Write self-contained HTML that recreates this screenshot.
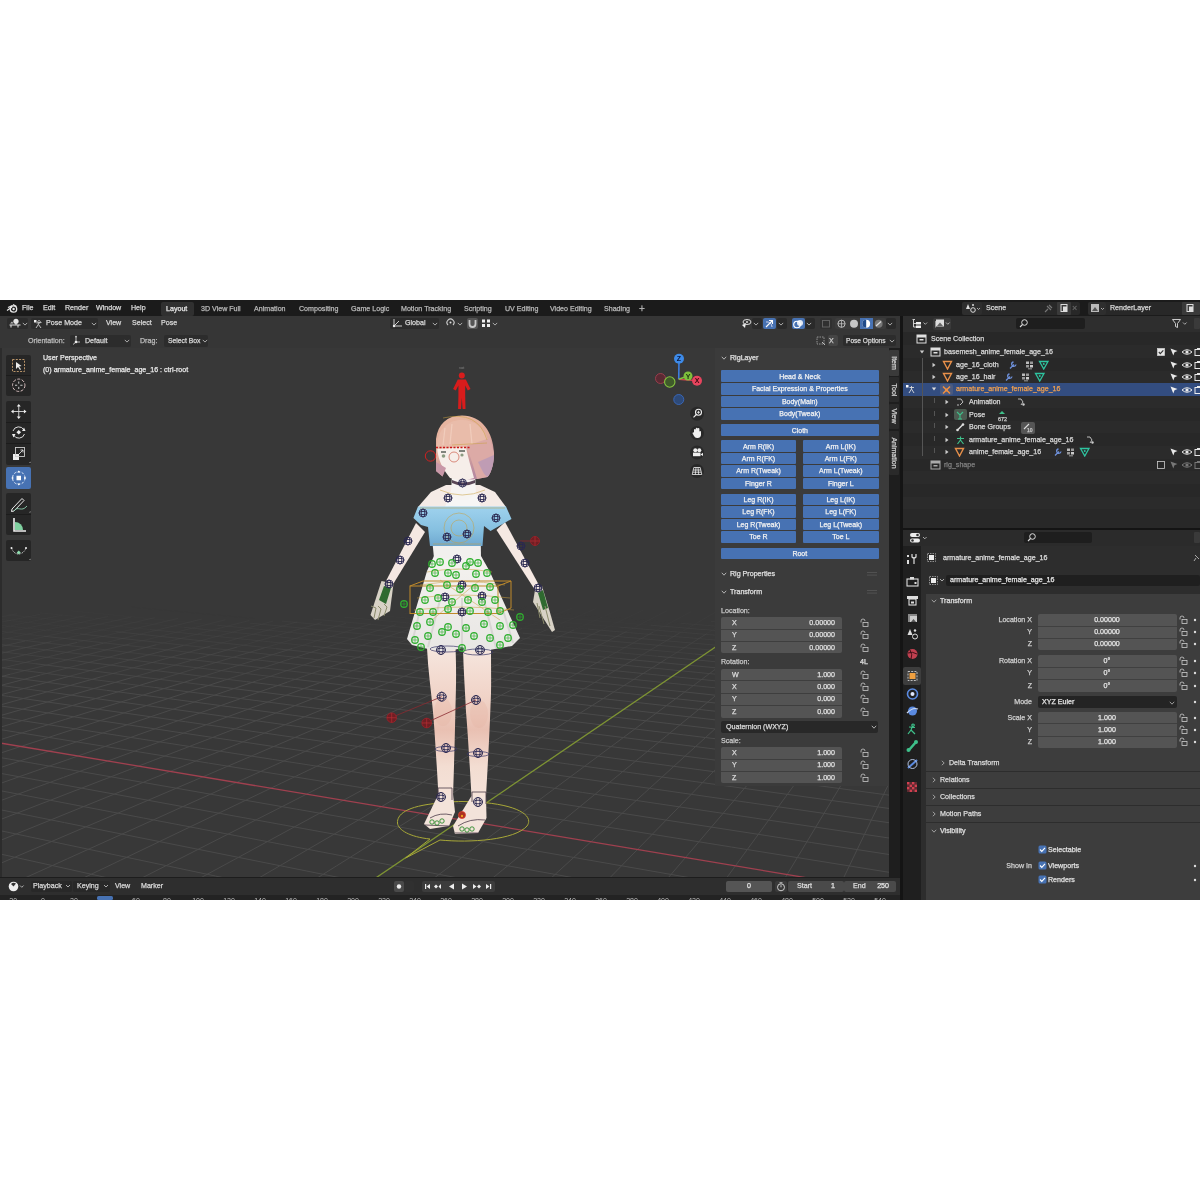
<!DOCTYPE html>
<html><head><meta charset="utf-8">
<style>
html,body{margin:0;padding:0;background:#fff;}
body{width:1200px;height:1200px;position:relative;overflow:hidden;font-family:"Liberation Sans",sans-serif;font-size:7.5px;color:#d8d8d8;}
.a{position:absolute;}
.t{position:absolute;white-space:nowrap;line-height:10px;height:10px;-webkit-text-stroke:0.25px currentColor;will-change:transform;}
</style></head><body>
<div class="a" style="left:0px;top:300px;width:1200px;height:600px;background:#161616;"></div>
<div class="a" style="left:0px;top:300px;width:1200px;height:16px;background:#1b1b1b;"></div>
<div class="a" style="left:0px;top:316px;width:900px;height:561px;background:#383838;"></div>
<div class="a" style="left:0px;top:316px;width:900px;height:32px;background:#363636;"></div>
<svg class="a" style="left:0;top:0" width="900" height="877" viewBox="0 0 900 877">
<defs><clipPath id="vc"><rect x="0" y="316" width="900" height="561"/></clipPath></defs>
<g clip-path="url(#vc)">
<g stroke="#4a4a4a" stroke-width="1" fill="none">
<line x1="-127.0" y1="636.6" x2="-5.1" y2="613.1" stroke-opacity="0.19"/>
<line x1="-102.0" y1="637.3" x2="17.3" y2="613.7" stroke-opacity="0.20"/>
<line x1="-76.9" y1="638.0" x2="39.8" y2="614.4" stroke-opacity="0.21"/>
<line x1="-51.6" y1="638.8" x2="62.5" y2="615.0" stroke-opacity="0.22"/>
<line x1="-26.2" y1="639.5" x2="85.3" y2="615.7" stroke-opacity="0.23"/>
<line x1="-137.2" y1="670.1" x2="-0.6" y2="640.2" stroke-opacity="0.57"/>
<line x1="-0.6" y1="640.2" x2="108.3" y2="616.4" stroke-opacity="0.24"/>
<line x1="-108.1" y1="671.0" x2="25.2" y2="641.0" stroke-opacity="0.58"/>
<line x1="25.2" y1="641.0" x2="131.4" y2="617.0" stroke-opacity="0.25"/>
<line x1="-78.8" y1="671.8" x2="51.1" y2="641.7" stroke-opacity="0.59"/>
<line x1="51.1" y1="641.7" x2="154.7" y2="617.7" stroke-opacity="0.26"/>
<line x1="-49.3" y1="672.6" x2="77.2" y2="642.4" stroke-opacity="0.59"/>
<line x1="77.2" y1="642.4" x2="178.1" y2="618.4" stroke-opacity="0.27"/>
<line x1="-178.8" y1="712.6" x2="-19.7" y2="673.5" stroke-opacity="0.93"/>
<line x1="-19.7" y1="673.5" x2="103.5" y2="643.2" stroke-opacity="0.60"/>
<line x1="103.5" y1="643.2" x2="201.6" y2="619.1" stroke-opacity="0.28"/>
<line x1="-144.6" y1="713.5" x2="10.1" y2="674.3" stroke-opacity="0.94"/>
<line x1="10.1" y1="674.3" x2="129.9" y2="643.9" stroke-opacity="0.61"/>
<line x1="129.9" y1="643.9" x2="225.3" y2="619.8" stroke-opacity="0.29"/>
<line x1="-110.1" y1="714.5" x2="40.2" y2="675.1" stroke-opacity="0.94"/>
<line x1="40.2" y1="675.1" x2="156.5" y2="644.7" stroke-opacity="0.62"/>
<line x1="156.5" y1="644.7" x2="249.2" y2="620.5" stroke-opacity="0.30"/>
<line x1="-75.4" y1="715.4" x2="70.4" y2="676.0" stroke-opacity="0.95"/>
<line x1="70.4" y1="676.0" x2="183.2" y2="645.5" stroke-opacity="0.63"/>
<line x1="183.2" y1="645.5" x2="273.2" y2="621.1" stroke-opacity="0.31"/>
<line x1="-40.5" y1="716.4" x2="100.8" y2="676.9" stroke-opacity="0.96"/>
<line x1="100.8" y1="676.9" x2="210.2" y2="646.2" stroke-opacity="0.64"/>
<line x1="210.2" y1="646.2" x2="297.4" y2="621.8" stroke-opacity="0.31"/>
<line x1="-188.8" y1="770.5" x2="-5.4" y2="717.3" stroke-opacity="1.00"/>
<line x1="-5.4" y1="717.3" x2="131.4" y2="677.7" stroke-opacity="0.97"/>
<line x1="131.4" y1="677.7" x2="237.3" y2="647.0" stroke-opacity="0.65"/>
<line x1="237.3" y1="647.0" x2="321.7" y2="622.6" stroke-opacity="0.32"/>
<line x1="-147.4" y1="771.6" x2="29.9" y2="718.3" stroke-opacity="1.00"/>
<line x1="29.9" y1="718.3" x2="162.2" y2="678.6" stroke-opacity="0.97"/>
<line x1="162.2" y1="678.6" x2="264.6" y2="647.8" stroke-opacity="0.65"/>
<line x1="264.6" y1="647.8" x2="346.2" y2="623.3" stroke-opacity="0.33"/>
<line x1="-105.7" y1="772.7" x2="65.5" y2="719.3" stroke-opacity="1.00"/>
<line x1="65.5" y1="719.3" x2="193.1" y2="679.5" stroke-opacity="0.98"/>
<line x1="193.1" y1="679.5" x2="292.0" y2="648.6" stroke-opacity="0.66"/>
<line x1="292.0" y1="648.6" x2="370.9" y2="624.0" stroke-opacity="0.34"/>
<line x1="-63.7" y1="773.9" x2="101.3" y2="720.3" stroke-opacity="1.00"/>
<line x1="101.3" y1="720.3" x2="224.3" y2="680.3" stroke-opacity="0.99"/>
<line x1="224.3" y1="680.3" x2="319.7" y2="649.4" stroke-opacity="0.67"/>
<line x1="319.7" y1="649.4" x2="395.7" y2="624.7" stroke-opacity="0.35"/>
<line x1="395.7" y1="624.7" x2="457.7" y2="604.5" stroke-opacity="0.04"/>
<line x1="-21.5" y1="775.0" x2="137.3" y2="721.3" stroke-opacity="1.00"/>
<line x1="137.3" y1="721.3" x2="255.7" y2="681.2" stroke-opacity="1.00"/>
<line x1="255.7" y1="681.2" x2="347.5" y2="650.2" stroke-opacity="0.68"/>
<line x1="347.5" y1="650.2" x2="420.7" y2="625.4" stroke-opacity="0.36"/>
<line x1="420.7" y1="625.4" x2="480.4" y2="605.2" stroke-opacity="0.05"/>
<line x1="-194.0" y1="852.1" x2="21.0" y2="776.1" stroke-opacity="1.00"/>
<line x1="21.0" y1="776.1" x2="173.5" y2="722.3" stroke-opacity="1.00"/>
<line x1="173.5" y1="722.3" x2="287.3" y2="682.1" stroke-opacity="1.00"/>
<line x1="287.3" y1="682.1" x2="375.5" y2="651.0" stroke-opacity="0.69"/>
<line x1="375.5" y1="651.0" x2="445.8" y2="626.1" stroke-opacity="0.37"/>
<line x1="445.8" y1="626.1" x2="503.2" y2="605.9" stroke-opacity="0.06"/>
<line x1="-142.4" y1="853.4" x2="63.7" y2="777.3" stroke-opacity="1.00"/>
<line x1="63.7" y1="777.3" x2="210.0" y2="723.3" stroke-opacity="1.00"/>
<line x1="210.0" y1="723.3" x2="319.1" y2="683.0" stroke-opacity="1.00"/>
<line x1="319.1" y1="683.0" x2="403.7" y2="651.8" stroke-opacity="0.70"/>
<line x1="403.7" y1="651.8" x2="471.1" y2="626.9" stroke-opacity="0.38"/>
<line x1="471.1" y1="626.9" x2="526.2" y2="606.6" stroke-opacity="0.07"/>
<line x1="-90.4" y1="854.7" x2="106.8" y2="778.4" stroke-opacity="1.00"/>
<line x1="106.8" y1="778.4" x2="246.7" y2="724.3" stroke-opacity="1.00"/>
<line x1="246.7" y1="724.3" x2="351.1" y2="683.9" stroke-opacity="1.00"/>
<line x1="351.1" y1="683.9" x2="432.0" y2="652.6" stroke-opacity="0.71"/>
<line x1="432.0" y1="652.6" x2="496.6" y2="627.6" stroke-opacity="0.39"/>
<line x1="496.6" y1="627.6" x2="549.3" y2="607.2" stroke-opacity="0.08"/>
<line x1="-38.2" y1="856.1" x2="150.0" y2="779.6" stroke-opacity="1.00"/>
<line x1="150.0" y1="779.6" x2="283.6" y2="725.3" stroke-opacity="1.00"/>
<line x1="283.6" y1="725.3" x2="383.3" y2="684.8" stroke-opacity="1.00"/>
<line x1="383.3" y1="684.8" x2="460.6" y2="653.4" stroke-opacity="0.71"/>
<line x1="460.6" y1="653.4" x2="522.2" y2="628.4" stroke-opacity="0.40"/>
<line x1="522.2" y1="628.4" x2="572.6" y2="607.9" stroke-opacity="0.09"/>
<line x1="-183.2" y1="836.9" x2="28.0" y2="886.6" stroke-opacity="1.00"/>
<line x1="28.0" y1="886.6" x2="294.2" y2="949.1" stroke-opacity="1.00"/>
<line x1="-256.8" y1="973.5" x2="14.4" y2="857.4" stroke-opacity="1.00"/>
<line x1="14.4" y1="857.4" x2="193.6" y2="780.8" stroke-opacity="1.00"/>
<line x1="193.6" y1="780.8" x2="320.8" y2="726.4" stroke-opacity="1.00"/>
<line x1="320.8" y1="726.4" x2="415.7" y2="685.7" stroke-opacity="1.00"/>
<line x1="415.7" y1="685.7" x2="489.3" y2="654.2" stroke-opacity="0.72"/>
<line x1="489.3" y1="654.2" x2="548.1" y2="629.1" stroke-opacity="0.41"/>
<line x1="548.1" y1="629.1" x2="596.0" y2="608.6" stroke-opacity="0.10"/>
<line x1="-98.8" y1="832.0" x2="122.8" y2="881.2" stroke-opacity="1.00"/>
<line x1="122.8" y1="881.2" x2="402.1" y2="943.3" stroke-opacity="1.00"/>
<line x1="-190.1" y1="975.1" x2="67.3" y2="858.8" stroke-opacity="1.00"/>
<line x1="67.3" y1="858.8" x2="237.4" y2="782.0" stroke-opacity="1.00"/>
<line x1="237.4" y1="782.0" x2="358.2" y2="727.4" stroke-opacity="1.00"/>
<line x1="358.2" y1="727.4" x2="448.4" y2="686.7" stroke-opacity="1.00"/>
<line x1="448.4" y1="686.7" x2="518.3" y2="655.1" stroke-opacity="0.73"/>
<line x1="518.3" y1="655.1" x2="574.1" y2="629.9" stroke-opacity="0.42"/>
<line x1="574.1" y1="629.9" x2="619.6" y2="609.3" stroke-opacity="0.11"/>
<line x1="-204.3" y1="787.6" x2="-16.2" y2="827.2" stroke-opacity="1.00"/>
<line x1="-16.2" y1="827.2" x2="215.4" y2="876.0" stroke-opacity="1.00"/>
<line x1="215.4" y1="876.0" x2="507.7" y2="937.6" stroke-opacity="1.00"/>
<line x1="-123.0" y1="976.7" x2="120.6" y2="860.2" stroke-opacity="1.00"/>
<line x1="120.6" y1="860.2" x2="281.5" y2="783.1" stroke-opacity="1.00"/>
<line x1="281.5" y1="783.1" x2="395.9" y2="728.4" stroke-opacity="1.00"/>
<line x1="395.9" y1="728.4" x2="481.2" y2="687.6" stroke-opacity="1.00"/>
<line x1="481.2" y1="687.6" x2="547.4" y2="655.9" stroke-opacity="0.74"/>
<line x1="547.4" y1="655.9" x2="600.2" y2="630.6" stroke-opacity="0.43"/>
<line x1="600.2" y1="630.6" x2="643.4" y2="610.0" stroke-opacity="0.12"/>
<line x1="-131.6" y1="783.3" x2="64.5" y2="822.6" stroke-opacity="1.00"/>
<line x1="64.5" y1="822.6" x2="306.1" y2="870.9" stroke-opacity="1.00"/>
<line x1="306.1" y1="870.9" x2="611.1" y2="932.0" stroke-opacity="1.00"/>
<line x1="-55.5" y1="978.4" x2="174.1" y2="861.6" stroke-opacity="1.00"/>
<line x1="174.1" y1="861.6" x2="325.9" y2="784.3" stroke-opacity="1.00"/>
<line x1="325.9" y1="784.3" x2="433.8" y2="729.5" stroke-opacity="1.00"/>
<line x1="433.8" y1="729.5" x2="514.3" y2="688.5" stroke-opacity="1.00"/>
<line x1="514.3" y1="688.5" x2="576.7" y2="656.7" stroke-opacity="0.75"/>
<line x1="576.7" y1="656.7" x2="626.6" y2="631.4" stroke-opacity="0.44"/>
<line x1="626.6" y1="631.4" x2="667.3" y2="610.7" stroke-opacity="0.13"/>
<line x1="-60.5" y1="779.1" x2="143.4" y2="818.0" stroke-opacity="1.00"/>
<line x1="143.4" y1="818.0" x2="394.8" y2="865.9" stroke-opacity="1.00"/>
<line x1="394.8" y1="865.9" x2="712.3" y2="926.5" stroke-opacity="1.00"/>
<line x1="12.4" y1="980.0" x2="228.0" y2="863.0" stroke-opacity="1.00"/>
<line x1="228.0" y1="863.0" x2="370.6" y2="785.5" stroke-opacity="1.00"/>
<line x1="370.6" y1="785.5" x2="471.9" y2="730.5" stroke-opacity="1.00"/>
<line x1="471.9" y1="730.5" x2="547.6" y2="689.4" stroke-opacity="1.00"/>
<line x1="547.6" y1="689.4" x2="606.3" y2="657.6" stroke-opacity="0.76"/>
<line x1="606.3" y1="657.6" x2="653.1" y2="632.2" stroke-opacity="0.45"/>
<line x1="653.1" y1="632.2" x2="691.4" y2="611.4" stroke-opacity="0.15"/>
<line x1="-166.1" y1="743.0" x2="9.0" y2="774.9" stroke-opacity="1.00"/>
<line x1="9.0" y1="774.9" x2="220.6" y2="813.5" stroke-opacity="1.00"/>
<line x1="220.6" y1="813.5" x2="481.6" y2="861.0" stroke-opacity="1.00"/>
<line x1="481.6" y1="861.0" x2="811.5" y2="921.1" stroke-opacity="1.00"/>
<line x1="80.6" y1="981.7" x2="282.2" y2="864.4" stroke-opacity="1.00"/>
<line x1="282.2" y1="864.4" x2="415.5" y2="786.8" stroke-opacity="1.00"/>
<line x1="415.5" y1="786.8" x2="510.3" y2="731.6" stroke-opacity="1.00"/>
<line x1="510.3" y1="731.6" x2="581.1" y2="690.4" stroke-opacity="1.00"/>
<line x1="581.1" y1="690.4" x2="636.0" y2="658.4" stroke-opacity="0.77"/>
<line x1="636.0" y1="658.4" x2="679.8" y2="632.9" stroke-opacity="0.46"/>
<line x1="679.8" y1="632.9" x2="715.6" y2="612.1" stroke-opacity="0.16"/>
<line x1="-104.3" y1="739.3" x2="77.0" y2="770.9" stroke-opacity="1.00"/>
<line x1="77.0" y1="770.9" x2="296.2" y2="809.1" stroke-opacity="1.00"/>
<line x1="296.2" y1="809.1" x2="566.6" y2="856.2" stroke-opacity="1.00"/>
<line x1="566.6" y1="856.2" x2="908.6" y2="915.9" stroke-opacity="1.00"/>
<line x1="149.3" y1="983.4" x2="336.7" y2="865.8" stroke-opacity="1.00"/>
<line x1="336.7" y1="865.8" x2="460.8" y2="788.0" stroke-opacity="1.00"/>
<line x1="460.8" y1="788.0" x2="548.9" y2="732.7" stroke-opacity="1.00"/>
<line x1="548.9" y1="732.7" x2="614.8" y2="691.3" stroke-opacity="1.00"/>
<line x1="614.8" y1="691.3" x2="665.9" y2="659.3" stroke-opacity="0.78"/>
<line x1="665.9" y1="659.3" x2="706.7" y2="633.7" stroke-opacity="0.47"/>
<line x1="706.7" y1="633.7" x2="740.0" y2="612.8" stroke-opacity="0.17"/>
<line x1="-147.2" y1="706.0" x2="15.3" y2="732.0" stroke-opacity="1.00"/>
<line x1="15.3" y1="732.0" x2="208.6" y2="763.1" stroke-opacity="1.00"/>
<line x1="208.6" y1="763.1" x2="442.5" y2="800.6" stroke-opacity="1.00"/>
<line x1="442.5" y1="800.6" x2="731.4" y2="847.0" stroke-opacity="1.00"/>
<line x1="731.4" y1="847.0" x2="1097.1" y2="905.7" stroke-opacity="1.00"/>
<line x1="287.8" y1="986.7" x2="446.8" y2="868.6" stroke-opacity="1.00"/>
<line x1="446.8" y1="868.6" x2="552.1" y2="790.4" stroke-opacity="1.00"/>
<line x1="552.1" y1="790.4" x2="627.0" y2="734.8" stroke-opacity="1.00"/>
<line x1="627.0" y1="734.8" x2="683.0" y2="693.3" stroke-opacity="1.00"/>
<line x1="683.0" y1="693.3" x2="726.4" y2="661.0" stroke-opacity="0.79"/>
<line x1="726.4" y1="661.0" x2="761.1" y2="635.3" stroke-opacity="0.49"/>
<line x1="761.1" y1="635.3" x2="789.4" y2="614.2" stroke-opacity="0.19"/>
<line x1="-94.2" y1="702.7" x2="73.1" y2="728.5" stroke-opacity="1.00"/>
<line x1="73.1" y1="728.5" x2="272.3" y2="759.3" stroke-opacity="1.00"/>
<line x1="272.3" y1="759.3" x2="513.4" y2="796.5" stroke-opacity="1.00"/>
<line x1="513.4" y1="796.5" x2="811.2" y2="842.5" stroke-opacity="1.00"/>
<line x1="811.2" y1="842.5" x2="1188.5" y2="900.7" stroke-opacity="1.00"/>
<line x1="357.6" y1="988.4" x2="502.4" y2="870.1" stroke-opacity="1.00"/>
<line x1="502.4" y1="870.1" x2="598.2" y2="791.7" stroke-opacity="1.00"/>
<line x1="598.2" y1="791.7" x2="666.4" y2="735.9" stroke-opacity="1.00"/>
<line x1="666.4" y1="735.9" x2="717.4" y2="694.2" stroke-opacity="1.00"/>
<line x1="717.4" y1="694.2" x2="756.9" y2="661.9" stroke-opacity="0.80"/>
<line x1="756.9" y1="661.9" x2="788.5" y2="636.1" stroke-opacity="0.50"/>
<line x1="788.5" y1="636.1" x2="814.3" y2="615.0" stroke-opacity="0.20"/>
<line x1="-42.4" y1="699.5" x2="129.7" y2="725.1" stroke-opacity="1.00"/>
<line x1="129.7" y1="725.1" x2="334.7" y2="755.6" stroke-opacity="1.00"/>
<line x1="334.7" y1="755.6" x2="582.8" y2="792.5" stroke-opacity="1.00"/>
<line x1="582.8" y1="792.5" x2="889.5" y2="838.1" stroke-opacity="1.00"/>
<line x1="889.5" y1="838.1" x2="1278.1" y2="895.9" stroke-opacity="1.00"/>
<line x1="427.9" y1="990.1" x2="558.3" y2="871.5" stroke-opacity="1.00"/>
<line x1="558.3" y1="871.5" x2="644.6" y2="792.9" stroke-opacity="1.00"/>
<line x1="644.6" y1="792.9" x2="706.1" y2="737.0" stroke-opacity="1.00"/>
<line x1="706.1" y1="737.0" x2="752.0" y2="695.2" stroke-opacity="1.00"/>
<line x1="752.0" y1="695.2" x2="787.7" y2="662.8" stroke-opacity="0.81"/>
<line x1="787.7" y1="662.8" x2="816.2" y2="636.9" stroke-opacity="0.51"/>
<line x1="816.2" y1="636.9" x2="839.4" y2="615.7" stroke-opacity="0.21"/>
<line x1="-142.1" y1="674.8" x2="8.4" y2="696.4" stroke-opacity="0.87"/>
<line x1="8.4" y1="696.4" x2="185.2" y2="721.7" stroke-opacity="1.00"/>
<line x1="185.2" y1="721.7" x2="395.7" y2="751.9" stroke-opacity="1.00"/>
<line x1="395.7" y1="751.9" x2="650.8" y2="788.5" stroke-opacity="1.00"/>
<line x1="650.8" y1="788.5" x2="966.2" y2="833.8" stroke-opacity="1.00"/>
<line x1="498.6" y1="991.8" x2="614.5" y2="873.0" stroke-opacity="1.00"/>
<line x1="614.5" y1="873.0" x2="691.4" y2="794.2" stroke-opacity="1.00"/>
<line x1="691.4" y1="794.2" x2="746.0" y2="738.1" stroke-opacity="1.00"/>
<line x1="746.0" y1="738.1" x2="786.9" y2="696.2" stroke-opacity="1.00"/>
<line x1="786.9" y1="696.2" x2="818.7" y2="663.7" stroke-opacity="0.82"/>
<line x1="818.7" y1="663.7" x2="844.0" y2="637.7" stroke-opacity="0.52"/>
<line x1="844.0" y1="637.7" x2="864.7" y2="616.5" stroke-opacity="0.22"/>
<line x1="-96.4" y1="671.9" x2="58.0" y2="693.3" stroke-opacity="0.85"/>
<line x1="58.0" y1="693.3" x2="239.4" y2="718.4" stroke-opacity="1.00"/>
<line x1="239.4" y1="718.4" x2="455.6" y2="748.4" stroke-opacity="1.00"/>
<line x1="455.6" y1="748.4" x2="717.4" y2="784.7" stroke-opacity="1.00"/>
<line x1="717.4" y1="784.7" x2="1041.3" y2="829.5" stroke-opacity="1.00"/>
<line x1="569.7" y1="993.6" x2="671.1" y2="874.4" stroke-opacity="1.00"/>
<line x1="671.1" y1="874.4" x2="738.4" y2="795.4" stroke-opacity="1.00"/>
<line x1="738.4" y1="795.4" x2="786.2" y2="739.2" stroke-opacity="1.00"/>
<line x1="786.2" y1="739.2" x2="822.0" y2="697.2" stroke-opacity="1.00"/>
<line x1="822.0" y1="697.2" x2="849.8" y2="664.6" stroke-opacity="0.83"/>
<line x1="849.8" y1="664.6" x2="872.0" y2="638.5" stroke-opacity="0.53"/>
<line x1="872.0" y1="638.5" x2="890.2" y2="617.2" stroke-opacity="0.23"/>
<line x1="-51.6" y1="669.1" x2="106.7" y2="690.3" stroke-opacity="0.82"/>
<line x1="106.7" y1="690.3" x2="292.6" y2="715.2" stroke-opacity="1.00"/>
<line x1="292.6" y1="715.2" x2="514.2" y2="744.9" stroke-opacity="1.00"/>
<line x1="514.2" y1="744.9" x2="782.7" y2="780.9" stroke-opacity="1.00"/>
<line x1="782.7" y1="780.9" x2="1115.0" y2="825.4" stroke-opacity="1.00"/>
<line x1="641.2" y1="995.3" x2="728.1" y2="875.9" stroke-opacity="1.00"/>
<line x1="728.1" y1="875.9" x2="785.7" y2="796.7" stroke-opacity="1.00"/>
<line x1="785.7" y1="796.7" x2="826.7" y2="740.3" stroke-opacity="1.00"/>
<line x1="826.7" y1="740.3" x2="857.4" y2="698.2" stroke-opacity="1.00"/>
<line x1="857.4" y1="698.2" x2="881.2" y2="665.5" stroke-opacity="0.84"/>
<line x1="881.2" y1="665.5" x2="900.3" y2="639.3" stroke-opacity="0.54"/>
<line x1="900.3" y1="639.3" x2="915.8" y2="617.9" stroke-opacity="0.24"/>
<line x1="-147.2" y1="648.3" x2="-7.7" y2="666.4" stroke-opacity="0.60"/>
<line x1="-7.7" y1="666.4" x2="154.3" y2="687.4" stroke-opacity="0.79"/>
<line x1="154.3" y1="687.4" x2="344.7" y2="712.0" stroke-opacity="0.99"/>
<line x1="344.7" y1="712.0" x2="571.6" y2="741.5" stroke-opacity="1.00"/>
<line x1="571.6" y1="741.5" x2="846.8" y2="777.1" stroke-opacity="1.00"/>
<line x1="846.8" y1="777.1" x2="1187.3" y2="821.3" stroke-opacity="1.00"/>
<line x1="713.1" y1="997.1" x2="785.4" y2="877.4" stroke-opacity="1.00"/>
<line x1="785.4" y1="877.4" x2="833.3" y2="798.0" stroke-opacity="1.00"/>
<line x1="833.3" y1="798.0" x2="867.5" y2="741.5" stroke-opacity="1.00"/>
<line x1="867.5" y1="741.5" x2="893.0" y2="699.2" stroke-opacity="1.00"/>
<line x1="893.0" y1="699.2" x2="912.8" y2="666.4" stroke-opacity="0.84"/>
<line x1="912.8" y1="666.4" x2="928.7" y2="640.1" stroke-opacity="0.55"/>
<line x1="-107.3" y1="645.7" x2="35.3" y2="663.7" stroke-opacity="0.57"/>
<line x1="35.3" y1="663.7" x2="201.0" y2="684.5" stroke-opacity="0.77"/>
<line x1="201.0" y1="684.5" x2="395.7" y2="708.9" stroke-opacity="0.97"/>
<line x1="395.7" y1="708.9" x2="627.9" y2="738.1" stroke-opacity="1.00"/>
<line x1="627.9" y1="738.1" x2="909.5" y2="773.5" stroke-opacity="1.00"/>
<line x1="909.5" y1="773.5" x2="1258.2" y2="817.3" stroke-opacity="1.00"/>
<line x1="785.5" y1="998.8" x2="843.1" y2="878.9" stroke-opacity="1.00"/>
<line x1="843.1" y1="878.9" x2="881.3" y2="799.3" stroke-opacity="1.00"/>
<line x1="881.3" y1="799.3" x2="908.5" y2="742.6" stroke-opacity="1.00"/>
<line x1="908.5" y1="742.6" x2="928.9" y2="700.2" stroke-opacity="1.00"/>
<line x1="-68.3" y1="643.3" x2="77.4" y2="661.0" stroke-opacity="0.54"/>
<line x1="77.4" y1="661.0" x2="246.7" y2="681.7" stroke-opacity="0.74"/>
<line x1="246.7" y1="681.7" x2="445.7" y2="705.9" stroke-opacity="0.94"/>
<line x1="445.7" y1="705.9" x2="683.1" y2="734.8" stroke-opacity="1.00"/>
<line x1="683.1" y1="734.8" x2="971.0" y2="769.9" stroke-opacity="1.00"/>
<line x1="858.3" y1="1000.6" x2="901.1" y2="880.4" stroke-opacity="1.00"/>
<line x1="901.1" y1="880.4" x2="929.6" y2="800.6" stroke-opacity="1.00"/>
<line x1="-30.1" y1="640.9" x2="118.7" y2="658.5" stroke-opacity="0.51"/>
<line x1="118.7" y1="658.5" x2="291.5" y2="678.9" stroke-opacity="0.72"/>
<line x1="291.5" y1="678.9" x2="494.7" y2="702.9" stroke-opacity="0.92"/>
<line x1="494.7" y1="702.9" x2="737.2" y2="731.6" stroke-opacity="1.00"/>
<line x1="737.2" y1="731.6" x2="1031.4" y2="766.4" stroke-opacity="1.00"/>
<line x1="-124.6" y1="623.3" x2="7.3" y2="638.5" stroke-opacity="0.28"/>
<line x1="7.3" y1="638.5" x2="159.1" y2="655.9" stroke-opacity="0.48"/>
<line x1="159.1" y1="655.9" x2="335.4" y2="676.2" stroke-opacity="0.69"/>
<line x1="335.4" y1="676.2" x2="542.8" y2="700.0" stroke-opacity="0.90"/>
<line x1="542.8" y1="700.0" x2="790.2" y2="728.5" stroke-opacity="1.00"/>
<line x1="790.2" y1="728.5" x2="1090.6" y2="763.0" stroke-opacity="1.00"/>
<line x1="-90.4" y1="621.1" x2="44.0" y2="636.2" stroke-opacity="0.25"/>
<line x1="44.0" y1="636.2" x2="198.7" y2="653.4" stroke-opacity="0.46"/>
<line x1="198.7" y1="653.4" x2="378.4" y2="673.5" stroke-opacity="0.66"/>
<line x1="378.4" y1="673.5" x2="589.9" y2="697.2" stroke-opacity="0.87"/>
<line x1="589.9" y1="697.2" x2="842.2" y2="725.4" stroke-opacity="1.00"/>
<line x1="842.2" y1="725.4" x2="1148.7" y2="759.6" stroke-opacity="1.00"/>
<line x1="-57.0" y1="619.0" x2="80.0" y2="633.9" stroke-opacity="0.22"/>
<line x1="80.0" y1="633.9" x2="237.5" y2="651.0" stroke-opacity="0.43"/>
<line x1="237.5" y1="651.0" x2="420.6" y2="670.9" stroke-opacity="0.64"/>
<line x1="420.6" y1="670.9" x2="636.1" y2="694.4" stroke-opacity="0.85"/>
<line x1="636.1" y1="694.4" x2="893.3" y2="722.3" stroke-opacity="1.00"/>
<line x1="893.3" y1="722.3" x2="1205.7" y2="756.3" stroke-opacity="1.00"/>
<line x1="-24.1" y1="616.9" x2="115.3" y2="631.6" stroke-opacity="0.19"/>
<line x1="115.3" y1="631.6" x2="275.6" y2="648.6" stroke-opacity="0.40"/>
<line x1="275.6" y1="648.6" x2="462.0" y2="668.4" stroke-opacity="0.61"/>
<line x1="462.0" y1="668.4" x2="681.4" y2="691.6" stroke-opacity="0.82"/>
<line x1="681.4" y1="691.6" x2="943.4" y2="719.4" stroke-opacity="1.00"/>
<line x1="8.1" y1="614.8" x2="149.9" y2="629.5" stroke-opacity="0.15"/>
<line x1="149.9" y1="629.5" x2="313.0" y2="646.3" stroke-opacity="0.37"/>
<line x1="313.0" y1="646.3" x2="502.6" y2="665.9" stroke-opacity="0.58"/>
<line x1="502.6" y1="665.9" x2="725.9" y2="688.9" stroke-opacity="0.80"/>
<line x1="725.9" y1="688.9" x2="992.5" y2="716.4" stroke-opacity="1.00"/>
<line x1="39.7" y1="612.8" x2="183.8" y2="627.3" stroke-opacity="0.12"/>
<line x1="183.8" y1="627.3" x2="349.6" y2="644.0" stroke-opacity="0.34"/>
<line x1="349.6" y1="644.0" x2="542.5" y2="663.4" stroke-opacity="0.56"/>
<line x1="542.5" y1="663.4" x2="769.5" y2="686.3" stroke-opacity="0.78"/>
<line x1="769.5" y1="686.3" x2="1040.7" y2="713.6" stroke-opacity="0.99"/>
<line x1="70.6" y1="610.8" x2="217.1" y2="625.2" stroke-opacity="0.09"/>
<line x1="217.1" y1="625.2" x2="385.6" y2="641.8" stroke-opacity="0.31"/>
<line x1="385.6" y1="641.8" x2="581.6" y2="661.0" stroke-opacity="0.53"/>
<line x1="581.6" y1="661.0" x2="812.4" y2="683.7" stroke-opacity="0.75"/>
<line x1="812.4" y1="683.7" x2="1088.1" y2="710.8" stroke-opacity="0.97"/>
<line x1="101.0" y1="608.9" x2="249.7" y2="623.1" stroke-opacity="0.06"/>
<line x1="249.7" y1="623.1" x2="420.9" y2="639.5" stroke-opacity="0.28"/>
<line x1="420.9" y1="639.5" x2="619.9" y2="658.6" stroke-opacity="0.51"/>
<line x1="619.9" y1="658.6" x2="854.4" y2="681.1" stroke-opacity="0.73"/>
<line x1="854.4" y1="681.1" x2="1134.6" y2="708.0" stroke-opacity="0.95"/>
<line x1="130.8" y1="607.0" x2="281.8" y2="621.1" stroke-opacity="0.03"/>
<line x1="281.8" y1="621.1" x2="455.5" y2="637.4" stroke-opacity="0.25"/>
<line x1="455.5" y1="637.4" x2="657.6" y2="656.3" stroke-opacity="0.48"/>
<line x1="657.6" y1="656.3" x2="895.7" y2="678.6" stroke-opacity="0.70"/>
<line x1="895.7" y1="678.6" x2="1180.3" y2="705.3" stroke-opacity="0.93"/>
<line x1="313.2" y1="619.1" x2="489.5" y2="635.2" stroke-opacity="0.23"/>
<line x1="489.5" y1="635.2" x2="694.6" y2="654.0" stroke-opacity="0.45"/>
<line x1="694.6" y1="654.0" x2="936.2" y2="676.2" stroke-opacity="0.68"/>
<line x1="344.1" y1="617.2" x2="522.9" y2="633.2" stroke-opacity="0.20"/>
<line x1="522.9" y1="633.2" x2="730.9" y2="651.8" stroke-opacity="0.43"/>
<line x1="730.9" y1="651.8" x2="976.0" y2="673.7" stroke-opacity="0.65"/>
<line x1="374.4" y1="615.2" x2="555.6" y2="631.1" stroke-opacity="0.17"/>
<line x1="555.6" y1="631.1" x2="766.6" y2="649.6" stroke-opacity="0.40"/>
<line x1="766.6" y1="649.6" x2="1015.2" y2="671.4" stroke-opacity="0.63"/>
<line x1="404.2" y1="613.3" x2="587.8" y2="629.1" stroke-opacity="0.14"/>
<line x1="587.8" y1="629.1" x2="801.6" y2="647.4" stroke-opacity="0.37"/>
<line x1="801.6" y1="647.4" x2="1053.6" y2="669.0" stroke-opacity="0.61"/>
<line x1="433.4" y1="611.5" x2="619.4" y2="627.1" stroke-opacity="0.11"/>
<line x1="619.4" y1="627.1" x2="836.0" y2="645.3" stroke-opacity="0.35"/>
<line x1="836.0" y1="645.3" x2="1091.3" y2="666.7" stroke-opacity="0.58"/>
<line x1="462.1" y1="609.7" x2="650.5" y2="625.2" stroke-opacity="0.08"/>
<line x1="650.5" y1="625.2" x2="869.8" y2="643.2" stroke-opacity="0.32"/>
<line x1="869.8" y1="643.2" x2="1128.4" y2="664.5" stroke-opacity="0.56"/>
<line x1="490.3" y1="607.9" x2="681.0" y2="623.3" stroke-opacity="0.05"/>
<line x1="681.0" y1="623.3" x2="903.1" y2="641.2" stroke-opacity="0.29"/>
<line x1="903.1" y1="641.2" x2="1164.9" y2="662.3" stroke-opacity="0.53"/>
<line x1="711.0" y1="621.4" x2="935.7" y2="639.2" stroke-opacity="0.27"/>
<line x1="740.5" y1="619.5" x2="967.8" y2="637.2" stroke-opacity="0.24"/>
<line x1="759.6" y1="617.0" x2="986.8" y2="634.3" stroke-opacity="0.20"/>
<line x1="764.7" y1="613.5" x2="988.3" y2="630.2" stroke-opacity="0.15"/>
<line x1="769.7" y1="610.1" x2="989.8" y2="626.2" stroke-opacity="0.09"/>
<line x1="774.5" y1="606.8" x2="991.2" y2="622.4" stroke-opacity="0.04"/>
</g>
<g stroke="#a0404f" stroke-width="1.3"><line x1="-1563.3" y1="481.7" x2="12789.8" y2="2880.5"/></g>
<g stroke="#7e9433" stroke-width="1.3"><line x1="-2568.9" y1="2880.5" x2="1008.6" y2="447.6"/></g>
</g></svg>
<svg class="a" style="left:4px;top:302px;" width="16" height="13" viewBox="0 0 16 13"><g fill="none" stroke="#e8e8e8" stroke-width="1.3"><circle cx="9.5" cy="7" r="3.2"/></g>
<circle cx="9.6" cy="7" r="1.2" fill="#e8e8e8"/>
<path d="M3 8.5 L8 5 M4 5.5 L8.5 3.5 M9 2.5 L12.5 4.5" stroke="#e8e8e8" stroke-width="1.3" fill="none"/></svg>
<div class="t" style="left:22px;top:303.3px;color:#d9d9d9;font-size:7.1px;">File</div>
<div class="t" style="left:43px;top:303.3px;color:#d9d9d9;font-size:7.1px;">Edit</div>
<div class="t" style="left:64.5px;top:303.3px;color:#d9d9d9;font-size:7.1px;">Render</div>
<div class="t" style="left:95.5px;top:303.3px;color:#d9d9d9;font-size:7.1px;">Window</div>
<div class="t" style="left:130.5px;top:303.3px;color:#d9d9d9;font-size:7.1px;">Help</div>
<div class="a" style="left:161px;top:302px;width:33px;height:14px;background:#303030;border-radius:2px;"></div>
<div class="t" style="left:166px;top:304px;color:#e6e6e6;font-size:7.1px;">Layout</div>
<div class="t" style="left:201px;top:304px;color:#b8b8b8;font-size:7.1px;">3D View Full</div>
<div class="t" style="left:253.5px;top:304px;color:#b8b8b8;font-size:7.1px;">Animation</div>
<div class="t" style="left:298.5px;top:304px;color:#b8b8b8;font-size:7.1px;">Compositing</div>
<div class="t" style="left:350.5px;top:304px;color:#b8b8b8;font-size:7.1px;">Game Logic</div>
<div class="t" style="left:401px;top:304px;color:#b8b8b8;font-size:7.1px;">Motion Tracking</div>
<div class="t" style="left:463.5px;top:304px;color:#b8b8b8;font-size:7.1px;">Scripting</div>
<div class="t" style="left:504.5px;top:304px;color:#b8b8b8;font-size:7.1px;">UV Editing</div>
<div class="t" style="left:550px;top:304px;color:#b8b8b8;font-size:7.1px;">Video Editing</div>
<div class="t" style="left:603.5px;top:304px;color:#b8b8b8;font-size:7.1px;">Shading</div>
<div class="t" style="left:638.5px;top:303.5px;color:#b0b0b0;font-size:10px;">+</div>
<div class="a" style="left:962px;top:301.5px;width:118px;height:13px;background:#282828;border-radius:2px;"></div>
<div class="a" style="left:962px;top:301.5px;width:20px;height:13px;background:#2e2e2e;border-radius:2px;"></div>
<svg class="a" style="left:964px;top:302px;" width="16" height="12" viewBox="0 0 16 12"><path d="M4 2 L6 7 L2 7 Z" fill="#ddd"/><circle cx="9" cy="8" r="2.3" fill="none" stroke="#ddd" stroke-width="1"/><circle cx="9" cy="3" r="1" fill="#ddd"/><path d="M13 6 l1.5 1.5 l1.5 -1.5" stroke="#ccc" fill="none" stroke-width="0.8"/></svg>
<div class="t" style="left:986px;top:302.8px;color:#d9d9d9;font-size:7.1px;">Scene</div>
<svg class="a" style="left:1042px;top:302px;" width="12" height="12" viewBox="0 0 12 12"><path d="M3 10 L6 7 M5 4 L9 8 M7 3 L10 6" stroke="#777" stroke-width="1.1" fill="none"/></svg>
<div class="a" style="left:1057px;top:301.5px;width:14px;height:13px;background:#3a3a3a;border-radius:1px;"></div>
<svg class="a" style="left:1058px;top:302px;" width="12" height="12" viewBox="0 0 12 12"><rect x="3" y="2.5" width="6" height="7" fill="none" stroke="#ddd" stroke-width="1"/><rect x="5" y="4.5" width="4" height="5" fill="#ddd"/></svg>
<div class="t" style="left:1072px;top:302.8px;color:#666;font-size:9px;">×</div>
<div class="a" style="left:1088px;top:301.5px;width:112px;height:13px;background:#282828;border-radius:2px;"></div>
<div class="a" style="left:1088px;top:301.5px;width:18px;height:13px;background:#2e2e2e;border-radius:2px;"></div>
<svg class="a" style="left:1089px;top:302px;" width="16" height="12" viewBox="0 0 16 12"><rect x="2" y="2" width="8" height="8" fill="#bbb"/><path d="M3 9 L6 5 L9 9 Z" fill="#555"/><path d="M12 6 l1.5 1.5 l1.5 -1.5" stroke="#ccc" fill="none" stroke-width="0.8"/></svg>
<div class="t" style="left:1110px;top:302.8px;color:#d9d9d9;font-size:7.1px;">RenderLayer</div>
<div class="a" style="left:1182px;top:301.5px;width:18px;height:13px;background:#3a3a3a;border-radius:1px;"></div>
<svg class="a" style="left:1184px;top:302px;" width="12" height="12" viewBox="0 0 12 12"><rect x="3" y="2.5" width="6" height="7" fill="none" stroke="#ddd" stroke-width="1"/><rect x="5" y="4.5" width="4" height="5" fill="#ddd"/></svg>
<svg class="a" style="left:0;top:0" width="900" height="877" viewBox="0 0 900 877"><defs>
<linearGradient id="hairg" x1="0" y1="0" x2="0.4" y2="1"><stop offset="0" stop-color="#e9b8a2"/><stop offset="0.55" stop-color="#e3ae9c"/><stop offset="1" stop-color="#b88aa0"/></linearGradient>
<linearGradient id="blueg" x1="0" y1="0" x2="0" y2="1"><stop offset="0" stop-color="#9fd2ee"/><stop offset="0.6" stop-color="#86c0e0"/><stop offset="1" stop-color="#6fa8d0"/></linearGradient>
<linearGradient id="legg" x1="0" y1="0" x2="0" y2="1"><stop offset="0" stop-color="#f6e6de"/><stop offset="0.35" stop-color="#f0d2c6"/><stop offset="0.55" stop-color="#e9c0b2"/><stop offset="0.8" stop-color="#f3ddd2"/><stop offset="1" stop-color="#f5e2d8"/></linearGradient>
<linearGradient id="skirtg" x1="0" y1="0" x2="0" y2="1"><stop offset="0" stop-color="#f4f2ef"/><stop offset="1" stop-color="#e8e6e4"/></linearGradient>
</defs><g fill="#d81c1c"><circle cx="461.8" cy="375.5" r="3"/><path d="M457.8 379.5 H465.8 L470.5 389 L467.8 390.5 L465.2 385.5 V396 L465.5 409 H462.6 L461.8 398 L461 409 H458.1 L458.4 396 V385.5 L455.8 390.5 L453.1 389 Z"/></g><text x="461.8" y="369" font-size="3" fill="#888" text-anchor="middle" font-family="Liberation Sans">root</text><path d="M440 803 C 405 806, 397 815, 397.5 823 C 398 830, 410 837, 430 839 L 405.7 858 L 440 840 C 470 843, 515 840, 527 826 C 535 815, 515 802, 462 801.5 C 452 801.6, 446 802, 440 803 Z" fill="none" stroke="#a8a838" stroke-width="1"/><path d="M416 523 L386 581 L393.5 583.5 L425 532 Z" fill="#f5e8e2"/><path d="M505 522 L540.5 588 L535 590 L496.5 530 Z" fill="#f5e8e2"/><path d="M381.5 581 L393.5 583.5 L390 611 L375 620 L370.5 615 Z" fill="#d8d2c6"/><path d="M384 586 L391 588 L386 604 L379 600 Z" fill="#2f6a30"/><path d="M371 606 L376 608 L374 618 M378 606 L381 609 L378 620 M384 604 L387 607 L384 616" stroke="#8a8a6a" stroke-width="1" fill="none"/><path d="M535 590 L542 586 L550 612.5 L555 630 L552 632 L533 602 Z" fill="#d8d2c6"/><path d="M538 593 L543 590 L548 608 L543 610 Z" fill="#2f6a30"/><path d="M539 606 L544 624 M545 606 L550 626 M537 603 L540 618" stroke="#8a8a6a" stroke-width="1" fill="none"/><path d="M427 648 L455.5 648 C 456.5 670, 456 690, 455.5 706 C 455 730, 454 770, 453 796 L438.5 796 C 437 770, 435 735, 433 712 C 431 690, 428 670, 427 648 Z" fill="url(#legg)"/><path d="M463 648 L491 648 C 491 670, 491.5 690, 490.5 706 C 489.5 735, 487.5 770, 486 796 L471.5 796 C 470 770, 468 735, 466 712 C 465 690, 463.5 670, 463 648 Z" fill="url(#legg)"/><ellipse cx="443" cy="712" rx="9" ry="14" fill="#e6b2a2" opacity="0.3"/><ellipse cx="479" cy="714" rx="9" ry="14" fill="#e6b2a2" opacity="0.3"/><path d="M438.5 794 L453 794 L455 812 L449 826 L430 829 L424 824 Z" fill="#f3e3da"/><path d="M471.5 796 L486 796 L486.5 818 L478 833 L455 834 L453 826 Z" fill="#f3e3da"/><g fill="none" stroke="#4a3a48" stroke-width="0.8"><path d="M438 800 V788 H452 V800 M430 818 Q440 812 452 815 M425 825 L449 826"/><path d="M472 802 V792 H486 V804 M458 826 Q470 818 485 820 M455 833 L478 833"/></g><path d="M434 556 L481 556 L489.5 571 L520 638 L512 646 L495 649 L478 652 L462 648 L445 652 L428 649 L412 645 L407 639 L427 571 Z" fill="url(#skirtg)"/><path d="M440 600 L428 647 M462 598 L462 648 M484 600 L496 648 M420 610 L412 643 M503 610 L513 643" stroke="#d8d6d4" stroke-width="2" fill="none"/><path d="M432.6 544 L480.8 544 L481 558 L434 558 Z" fill="#f2f0ee"/><path d="M446 485 L480 485 L495 492 L506 507 L418 507 L431 492 Z" fill="#f5ebe6"/><path d="M452 488 L474 488 L482 510 L444 510 Z" fill="#f7f6f5"/><path d="M418 506.5 L506 506.5 L511.5 519 L490.5 531 L484 526 L482.5 546 L430 546 L428 527 L421 525 L413.4 518 Z" fill="url(#blueg)"/><path d="M452 474 L475 474 L476 494 L468 500 L458 500 L451 494 Z" fill="#f6f4f2"/><path d="M452 480 Q463 485 475 480 L475 483 Q463 488 452 483 Z" fill="#5a4858"/><path d="M462 415.5 C 447 415.5, 438 424, 436 439 L 436 471 L 442.5 476.5 L 447 465 C 452 476, 465 481, 477 479 L 487.5 477 C 492 472, 494 462, 494 453 C 493 432, 482 415.5, 462 415.5 Z" fill="url(#hairg)"/><path d="M437 447 L 466 447 C 468 458, 472 470, 474 478 L 462 481 L 450 478 C 444 470, 438 462, 437 447 Z" fill="#f6eee9"/><path d="M436.5 449 C 437 430, 447 420, 462 420 C 475 420, 484 428, 488 440 L 466 447 Z" fill="#e9bcaa"/><path d="M466 446 C 470 455, 474 468, 477 479 L 487.5 477 C 492 472, 494 462, 494 453 L 490 438 Z" fill="#dcaaa6"/><path d="M478 462 C 482 470, 484 475, 487.5 477 C 492 472, 494 462, 494 455 Z" fill="#b898b8" opacity="0.8"/><path d="M436 462 L436 471 L442.5 476.5 L446 468 Z" fill="#c898a8"/><path d="M445 428 L443 445 M452 424 L450 444 M470 424 L472 444" stroke="#f4d4c4" stroke-width="1.2" opacity="0.7"/><path d="M441 452 h5 M459 451 h6" stroke="#5a6058" stroke-width="1.3"/><circle cx="443.5" cy="456" r="1.8" fill="#8a9a80"/><circle cx="462" cy="455" r="1.6" fill="#8a9a80"/><path d="M436 447.5 L470 447.5" stroke="#c81818" stroke-width="1.6" stroke-dasharray="2 1.5"/><circle cx="430.5" cy="456" r="5.2" fill="none" stroke="#d02020" stroke-width="1"/><circle cx="454" cy="457" r="5" fill="none" stroke="#d07060" stroke-width="0.8"/><g stroke="#c8a040" stroke-width="0.7" fill="none" opacity="0.75"><path d="M443 418 Q478 410 487 440 M452 445 L487 443 M420 508 L505 508 M433 544 L481 544 M440 490 Q462 500 485 490" /><circle cx="459" cy="528" r="15"/><circle cx="459" cy="528" r="8"/><path d="M427 572 Q460 566 492 572 M420 585 Q462 578 505 585 M417 598 Q462 592 510 598 M414 610 Q462 604 514 610 M432 620 L480 580 M440 580 L500 620" /></g><g stroke="#c08a2a" stroke-width="1" fill="none"><rect x="410" y="586" width="88" height="27.5"/><path d="M410 586 L423 581 H511 V608 L498 613.5 M498 586 L511 581"/></g><g stroke="#9a2028" stroke-width="0.9" fill="#7a1a20" fill-opacity="0.85"><circle cx="391.7" cy="717.7" r="4.8"/><circle cx="426.7" cy="723" r="4.8"/><circle cx="535" cy="541" r="4.5"/></g><path d="M387 717.7 H396.5 M391.7 713 V722.5 M422 723 H431.5 M426.7 718.3 V727.7 M530.5 541 H539.5 M535 536.5 V545.5" stroke="#c03038" stroke-width="0.6"/><path d="M395 716 L441.7 696.7 M430 721 L476 700 M520 541 L535 541" stroke="#8a2a30" stroke-width="0.8"/><g stroke="#2a2850" stroke-width="0.9" fill="none"><circle cx="462.5" cy="483" r="4"/><ellipse cx="462.5" cy="483" rx="1.8" ry="4"/><ellipse cx="462.5" cy="483" rx="4" ry="1.6"/></g><g stroke="#2a2850" stroke-width="0.9" fill="none"><circle cx="448" cy="498" r="4"/><ellipse cx="448" cy="498" rx="1.8" ry="4"/><ellipse cx="448" cy="498" rx="4" ry="1.6"/></g><g stroke="#2a2850" stroke-width="0.9" fill="none"><circle cx="482" cy="498" r="4"/><ellipse cx="482" cy="498" rx="1.8" ry="4"/><ellipse cx="482" cy="498" rx="4" ry="1.6"/></g><g stroke="#2a2850" stroke-width="0.9" fill="none"><circle cx="423" cy="513" r="4"/><ellipse cx="423" cy="513" rx="1.8" ry="4"/><ellipse cx="423" cy="513" rx="4" ry="1.6"/></g><g stroke="#2a2850" stroke-width="0.9" fill="none"><circle cx="496" cy="518" r="4"/><ellipse cx="496" cy="518" rx="1.8" ry="4"/><ellipse cx="496" cy="518" rx="4" ry="1.6"/></g><g stroke="#2a2850" stroke-width="0.9" fill="none"><circle cx="447" cy="537" r="4"/><ellipse cx="447" cy="537" rx="1.8" ry="4"/><ellipse cx="447" cy="537" rx="4" ry="1.6"/></g><g stroke="#2a2850" stroke-width="0.9" fill="none"><circle cx="467" cy="534" r="4"/><ellipse cx="467" cy="534" rx="1.8" ry="4"/><ellipse cx="467" cy="534" rx="4" ry="1.6"/></g><g stroke="#2a2850" stroke-width="0.9" fill="none"><circle cx="408" cy="541" r="4"/><ellipse cx="408" cy="541" rx="1.8" ry="4"/><ellipse cx="408" cy="541" rx="4" ry="1.6"/></g><g stroke="#2a2850" stroke-width="0.9" fill="none"><circle cx="521" cy="546" r="4"/><ellipse cx="521" cy="546" rx="1.8" ry="4"/><ellipse cx="521" cy="546" rx="4" ry="1.6"/></g><g stroke="#2a2850" stroke-width="0.9" fill="none"><circle cx="400" cy="560" r="4"/><ellipse cx="400" cy="560" rx="1.8" ry="4"/><ellipse cx="400" cy="560" rx="4" ry="1.6"/></g><g stroke="#2a2850" stroke-width="0.9" fill="none"><circle cx="525" cy="563" r="4"/><ellipse cx="525" cy="563" rx="1.8" ry="4"/><ellipse cx="525" cy="563" rx="4" ry="1.6"/></g><g stroke="#2a2850" stroke-width="0.9" fill="none"><circle cx="389" cy="584" r="4"/><ellipse cx="389" cy="584" rx="1.8" ry="4"/><ellipse cx="389" cy="584" rx="4" ry="1.6"/></g><g stroke="#2a2850" stroke-width="0.9" fill="none"><circle cx="538" cy="588" r="4"/><ellipse cx="538" cy="588" rx="1.8" ry="4"/><ellipse cx="538" cy="588" rx="4" ry="1.6"/></g><g stroke="#2a2850" stroke-width="0.9" fill="none"><circle cx="457" cy="559" r="4"/><ellipse cx="457" cy="559" rx="1.8" ry="4"/><ellipse cx="457" cy="559" rx="4" ry="1.6"/></g><g stroke="#2a2850" stroke-width="0.9" fill="none"><circle cx="462" cy="585" r="4"/><ellipse cx="462" cy="585" rx="1.8" ry="4"/><ellipse cx="462" cy="585" rx="4" ry="1.6"/></g><g stroke="#2a2850" stroke-width="0.9" fill="none"><circle cx="445" cy="597" r="4"/><ellipse cx="445" cy="597" rx="1.8" ry="4"/><ellipse cx="445" cy="597" rx="4" ry="1.6"/></g><g stroke="#2a2850" stroke-width="0.9" fill="none"><circle cx="482" cy="596" r="4"/><ellipse cx="482" cy="596" rx="1.8" ry="4"/><ellipse cx="482" cy="596" rx="4" ry="1.6"/></g><g stroke="#2a2850" stroke-width="0.9" fill="none"><circle cx="462" cy="612" r="4"/><ellipse cx="462" cy="612" rx="1.8" ry="4"/><ellipse cx="462" cy="612" rx="4" ry="1.6"/></g><g stroke="#2a2850" stroke-width="0.9" fill="none"><circle cx="441.7" cy="696.7" r="4.5"/><ellipse cx="441.7" cy="696.7" rx="2.025" ry="4.5"/><ellipse cx="441.7" cy="696.7" rx="4.5" ry="1.8"/></g><g stroke="#2a2850" stroke-width="0.9" fill="none"><circle cx="476" cy="700" r="4.5"/><ellipse cx="476" cy="700" rx="2.025" ry="4.5"/><ellipse cx="476" cy="700" rx="4.5" ry="1.8"/></g><g stroke="#2a2850" stroke-width="0.9" fill="none"><circle cx="446" cy="748" r="4.5"/><ellipse cx="446" cy="748" rx="2.025" ry="4.5"/><ellipse cx="446" cy="748" rx="4.5" ry="1.8"/></g><g stroke="#2a2850" stroke-width="0.9" fill="none"><circle cx="478" cy="753" r="4.5"/><ellipse cx="478" cy="753" rx="2.025" ry="4.5"/><ellipse cx="478" cy="753" rx="4.5" ry="1.8"/></g><g stroke="#2a2850" stroke-width="0.9" fill="none"><circle cx="441" cy="797" r="4.5"/><ellipse cx="441" cy="797" rx="2.025" ry="4.5"/><ellipse cx="441" cy="797" rx="4.5" ry="1.8"/></g><g stroke="#2a2850" stroke-width="0.9" fill="none"><circle cx="478" cy="802" r="4.5"/><ellipse cx="478" cy="802" rx="2.025" ry="4.5"/><ellipse cx="478" cy="802" rx="4.5" ry="1.8"/></g><g stroke="#2a2850" stroke-width="0.9" fill="none"><circle cx="441" cy="650" r="4.5"/><ellipse cx="441" cy="650" rx="2.025" ry="4.5"/><ellipse cx="441" cy="650" rx="4.5" ry="1.8"/></g><g stroke="#2a2850" stroke-width="0.9" fill="none"><circle cx="480" cy="650" r="4.5"/><ellipse cx="480" cy="650" rx="2.025" ry="4.5"/><ellipse cx="480" cy="650" rx="4.5" ry="1.8"/></g><g fill="none" stroke="#3a3868" stroke-width="0.7"><ellipse cx="447" cy="649" rx="17" ry="3"/><ellipse cx="478" cy="652" rx="15" ry="3"/><ellipse cx="446" cy="749" rx="11" ry="2.5"/><ellipse cx="478" cy="754" rx="11" ry="2.5"/></g><g stroke="#30b030" stroke-width="1.2" fill="none"><circle cx="432" cy="564" r="3.3"/><path d="M428.7 564 H435.3 M432 560.7 V567.3" stroke-width="0.6"/></g><g stroke="#30b030" stroke-width="1.2" fill="none"><circle cx="440" cy="562" r="3.3"/><path d="M436.7 562 H443.3 M440 558.7 V565.3" stroke-width="0.6"/></g><g stroke="#30b030" stroke-width="1.2" fill="none"><circle cx="452" cy="563" r="3.3"/><path d="M448.7 563 H455.3 M452 559.7 V566.3" stroke-width="0.6"/></g><g stroke="#30b030" stroke-width="1.2" fill="none"><circle cx="470" cy="562" r="3.3"/><path d="M466.7 562 H473.3 M470 558.7 V565.3" stroke-width="0.6"/></g><g stroke="#30b030" stroke-width="1.2" fill="none"><circle cx="478" cy="563" r="3.3"/><path d="M474.7 563 H481.3 M478 559.7 V566.3" stroke-width="0.6"/></g><g stroke="#30b030" stroke-width="1.2" fill="none"><circle cx="466" cy="566" r="3.3"/><path d="M462.7 566 H469.3 M466 562.7 V569.3" stroke-width="0.6"/></g><g stroke="#30b030" stroke-width="1.2" fill="none"><circle cx="435" cy="573" r="3.3"/><path d="M431.7 573 H438.3 M435 569.7 V576.3" stroke-width="0.6"/></g><g stroke="#30b030" stroke-width="1.2" fill="none"><circle cx="448" cy="573" r="3.3"/><path d="M444.7 573 H451.3 M448 569.7 V576.3" stroke-width="0.6"/></g><g stroke="#30b030" stroke-width="1.2" fill="none"><circle cx="456" cy="575" r="3.3"/><path d="M452.7 575 H459.3 M456 571.7 V578.3" stroke-width="0.6"/></g><g stroke="#30b030" stroke-width="1.2" fill="none"><circle cx="476" cy="574" r="3.3"/><path d="M472.7 574 H479.3 M476 570.7 V577.3" stroke-width="0.6"/></g><g stroke="#30b030" stroke-width="1.2" fill="none"><circle cx="487" cy="573" r="3.3"/><path d="M483.7 573 H490.3 M487 569.7 V576.3" stroke-width="0.6"/></g><g stroke="#30b030" stroke-width="1.2" fill="none"><circle cx="430" cy="588" r="3.3"/><path d="M426.7 588 H433.3 M430 584.7 V591.3" stroke-width="0.6"/></g><g stroke="#30b030" stroke-width="1.2" fill="none"><circle cx="447" cy="585" r="3.3"/><path d="M443.7 585 H450.3 M447 581.7 V588.3" stroke-width="0.6"/></g><g stroke="#30b030" stroke-width="1.2" fill="none"><circle cx="460" cy="589" r="3.3"/><path d="M456.7 589 H463.3 M460 585.7 V592.3" stroke-width="0.6"/></g><g stroke="#30b030" stroke-width="1.2" fill="none"><circle cx="475" cy="588" r="3.3"/><path d="M471.7 588 H478.3 M475 584.7 V591.3" stroke-width="0.6"/></g><g stroke="#30b030" stroke-width="1.2" fill="none"><circle cx="490" cy="587" r="3.3"/><path d="M486.7 587 H493.3 M490 583.7 V590.3" stroke-width="0.6"/></g><g stroke="#30b030" stroke-width="1.2" fill="none"><circle cx="425" cy="600" r="3.3"/><path d="M421.7 600 H428.3 M425 596.7 V603.3" stroke-width="0.6"/></g><g stroke="#30b030" stroke-width="1.2" fill="none"><circle cx="438" cy="598" r="3.3"/><path d="M434.7 598 H441.3 M438 594.7 V601.3" stroke-width="0.6"/></g><g stroke="#30b030" stroke-width="1.2" fill="none"><circle cx="452" cy="602" r="3.3"/><path d="M448.7 602 H455.3 M452 598.7 V605.3" stroke-width="0.6"/></g><g stroke="#30b030" stroke-width="1.2" fill="none"><circle cx="468" cy="600" r="3.3"/><path d="M464.7 600 H471.3 M468 596.7 V603.3" stroke-width="0.6"/></g><g stroke="#30b030" stroke-width="1.2" fill="none"><circle cx="482" cy="602" r="3.3"/><path d="M478.7 602 H485.3 M482 598.7 V605.3" stroke-width="0.6"/></g><g stroke="#30b030" stroke-width="1.2" fill="none"><circle cx="495" cy="600" r="3.3"/><path d="M491.7 600 H498.3 M495 596.7 V603.3" stroke-width="0.6"/></g><g stroke="#30b030" stroke-width="1.2" fill="none"><circle cx="420" cy="612" r="3.3"/><path d="M416.7 612 H423.3 M420 608.7 V615.3" stroke-width="0.6"/></g><g stroke="#30b030" stroke-width="1.2" fill="none"><circle cx="433" cy="612" r="3.3"/><path d="M429.7 612 H436.3 M433 608.7 V615.3" stroke-width="0.6"/></g><g stroke="#30b030" stroke-width="1.2" fill="none"><circle cx="448" cy="609" r="3.3"/><path d="M444.7 609 H451.3 M448 605.7 V612.3" stroke-width="0.6"/></g><g stroke="#30b030" stroke-width="1.2" fill="none"><circle cx="470" cy="611" r="3.3"/><path d="M466.7 611 H473.3 M470 607.7 V614.3" stroke-width="0.6"/></g><g stroke="#30b030" stroke-width="1.2" fill="none"><circle cx="488" cy="612" r="3.3"/><path d="M484.7 612 H491.3 M488 608.7 V615.3" stroke-width="0.6"/></g><g stroke="#30b030" stroke-width="1.2" fill="none"><circle cx="500" cy="611" r="3.3"/><path d="M496.7 611 H503.3 M500 607.7 V614.3" stroke-width="0.6"/></g><g stroke="#30b030" stroke-width="1.2" fill="none"><circle cx="417" cy="626" r="3.3"/><path d="M413.7 626 H420.3 M417 622.7 V629.3" stroke-width="0.6"/></g><g stroke="#30b030" stroke-width="1.2" fill="none"><circle cx="430" cy="622" r="3.3"/><path d="M426.7 622 H433.3 M430 618.7 V625.3" stroke-width="0.6"/></g><g stroke="#30b030" stroke-width="1.2" fill="none"><circle cx="448" cy="627" r="3.3"/><path d="M444.7 627 H451.3 M448 623.7 V630.3" stroke-width="0.6"/></g><g stroke="#30b030" stroke-width="1.2" fill="none"><circle cx="466" cy="628" r="3.3"/><path d="M462.7 628 H469.3 M466 624.7 V631.3" stroke-width="0.6"/></g><g stroke="#30b030" stroke-width="1.2" fill="none"><circle cx="484" cy="624" r="3.3"/><path d="M480.7 624 H487.3 M484 620.7 V627.3" stroke-width="0.6"/></g><g stroke="#30b030" stroke-width="1.2" fill="none"><circle cx="500" cy="626" r="3.3"/><path d="M496.7 626 H503.3 M500 622.7 V629.3" stroke-width="0.6"/></g><g stroke="#30b030" stroke-width="1.2" fill="none"><circle cx="513" cy="625" r="3.3"/><path d="M509.7 625 H516.3 M513 621.7 V628.3" stroke-width="0.6"/></g><g stroke="#30b030" stroke-width="1.2" fill="none"><circle cx="415" cy="640" r="3.3"/><path d="M411.7 640 H418.3 M415 636.7 V643.3" stroke-width="0.6"/></g><g stroke="#30b030" stroke-width="1.2" fill="none"><circle cx="428" cy="636" r="3.3"/><path d="M424.7 636 H431.3 M428 632.7 V639.3" stroke-width="0.6"/></g><g stroke="#30b030" stroke-width="1.2" fill="none"><circle cx="442" cy="632" r="3.3"/><path d="M438.7 632 H445.3 M442 628.7 V635.3" stroke-width="0.6"/></g><g stroke="#30b030" stroke-width="1.2" fill="none"><circle cx="456" cy="634" r="3.3"/><path d="M452.7 634 H459.3 M456 630.7 V637.3" stroke-width="0.6"/></g><g stroke="#30b030" stroke-width="1.2" fill="none"><circle cx="474" cy="636" r="3.3"/><path d="M470.7 636 H477.3 M474 632.7 V639.3" stroke-width="0.6"/></g><g stroke="#30b030" stroke-width="1.2" fill="none"><circle cx="490" cy="638" r="3.3"/><path d="M486.7 638 H493.3 M490 634.7 V641.3" stroke-width="0.6"/></g><g stroke="#30b030" stroke-width="1.2" fill="none"><circle cx="508" cy="638" r="3.3"/><path d="M504.7 638 H511.3 M508 634.7 V641.3" stroke-width="0.6"/></g><g stroke="#30b030" stroke-width="1.2" fill="none"><circle cx="421" cy="647" r="3.3"/><path d="M417.7 647 H424.3 M421 643.7 V650.3" stroke-width="0.6"/></g><g stroke="#30b030" stroke-width="1.2" fill="none"><circle cx="462" cy="648" r="3.3"/><path d="M458.7 648 H465.3 M462 644.7 V651.3" stroke-width="0.6"/></g><g stroke="#30b030" stroke-width="1.2" fill="none"><circle cx="500" cy="645" r="3.3"/><path d="M496.7 645 H503.3 M500 641.7 V648.3" stroke-width="0.6"/></g><g stroke="#30b030" stroke-width="1.2" fill="none"><circle cx="404" cy="604" r="3.3"/><path d="M400.7 604 H407.3 M404 600.7 V607.3" stroke-width="0.6"/></g><g stroke="#30b030" stroke-width="1.2" fill="none"><circle cx="520" cy="617" r="3.3"/><path d="M516.7 617 H523.3 M520 613.7 V620.3" stroke-width="0.6"/></g><g stroke="#2a8a2a" stroke-width="0.9" fill="none"><circle cx="432" cy="822" r="2.2"/><circle cx="437" cy="823" r="2.2"/><circle cx="442" cy="821" r="2.2"/><circle cx="462" cy="829" r="2.2"/><circle cx="467" cy="830" r="2.2"/><circle cx="472" cy="829" r="2.2"/></g><circle cx="462" cy="815" r="3.5" fill="#a83020" stroke="#e04030" stroke-width="0.8"/><circle cx="462" cy="816" r="1.2" fill="#f0a020"/></svg>
<div class="a" style="left:7px;top:317.5px;width:21px;height:11.5px;background:#2c2c2c;border-radius:2px;"></div>
<svg class="a" style="left:8px;top:318px;" width="14" height="10" viewBox="0 0 14 10"><circle cx="8" cy="3.3" r="2.6" fill="#e6e6e6"/><path d="M1.5 7 H12.5 M3 7 V9.5 M10 7 V9.5 M8 5 V7" stroke="#ddd" stroke-width="1.1"/><path d="M2 5.5 L4 3.5 L5.5 5.5Z" fill="#bbb"/></svg>
<svg class="a" style="left:21.5px;top:320.5px;" width="6" height="6" viewBox="0 0 6 6"><path d="M0.7999999999999998 1.9 L3 4.1 L5.2 1.9" stroke="#bbb" stroke-width="0.9" fill="none"/></svg>
<div class="a" style="left:31px;top:317.5px;width:66.5px;height:11.5px;background:#2c2c2c;border-radius:2px;"></div>
<svg class="a" style="left:33px;top:317.5px;" width="12" height="11" viewBox="0 0 12 11"><rect x="1" y="2" width="2.5" height="2.5" fill="#eee"/><path d="M6 2.5 a1.2 1.2 0 1 0 0.1 0 M6.5 4 L5 7 L3 10 M5.5 6.5 L8 10 M3.5 5 L8.5 4.5" stroke="#ccc" stroke-width="0.9" fill="none"/></svg>
<div class="t" style="left:45.5px;top:318.2px;color:#d9d9d9;font-size:7.1px;">Pose Mode</div>
<svg class="a" style="left:91px;top:320.5px;" width="6" height="6" viewBox="0 0 6 6"><path d="M0.7999999999999998 1.9 L3 4.1 L5.2 1.9" stroke="#bbb" stroke-width="0.9" fill="none"/></svg>
<div class="t" style="left:106px;top:318.2px;color:#d9d9d9;font-size:7.1px;">View</div>
<div class="t" style="left:131.5px;top:318.2px;color:#d9d9d9;font-size:7.1px;">Select</div>
<div class="t" style="left:160.5px;top:318.2px;color:#d9d9d9;font-size:7.1px;">Pose</div>
<div class="t" style="left:28px;top:335.5px;color:#bdbdbd;font-size:7.1px;">Orientation:</div>
<div class="a" style="left:69.5px;top:335px;width:61px;height:11.5px;background:#2c2c2c;border-radius:2px;"></div>
<svg class="a" style="left:71px;top:335px;" width="12" height="11" viewBox="0 0 12 11"><path d="M5 1.5 V7 M5 7 L2 9.5 M5 7 L9 7" stroke="#ccc" stroke-width="0.9" fill="none"/><circle cx="5" cy="7" r="1.3" fill="#eee"/><circle cx="5" cy="1.6" r="0.9" fill="#ccc"/></svg>
<div class="t" style="left:85px;top:335.5px;color:#d9d9d9;font-size:7.1px;">Default</div>
<svg class="a" style="left:124px;top:338px;" width="6" height="6" viewBox="0 0 6 6"><path d="M0.7999999999999998 1.9 L3 4.1 L5.2 1.9" stroke="#bbb" stroke-width="0.9" fill="none"/></svg>
<div class="t" style="left:139.5px;top:335.5px;color:#bdbdbd;font-size:7.1px;">Drag:</div>
<div class="a" style="left:163.5px;top:335px;width:44px;height:11.5px;background:#2c2c2c;border-radius:2px;"></div>
<div class="t" style="left:167.5px;top:335.5px;color:#d9d9d9;font-size:6.8px;">Select Box</div>
<svg class="a" style="left:202px;top:338px;" width="6" height="6" viewBox="0 0 6 6"><path d="M0.7999999999999998 1.9 L3 4.1 L5.2 1.9" stroke="#bbb" stroke-width="0.9" fill="none"/></svg>
<div class="a" style="left:390px;top:317.5px;width:49px;height:11.5px;background:#2c2c2c;border-radius:2px;"></div>
<svg class="a" style="left:392px;top:318px;" width="12" height="10" viewBox="0 0 12 10"><path d="M2 1 V8 H10 M2 8 L7 3" stroke="#ccc" stroke-width="1" fill="none"/><circle cx="2" cy="8" r="1.2" fill="#eee"/></svg>
<div class="t" style="left:405px;top:318.2px;color:#d9d9d9;font-size:7.1px;">Global</div>
<svg class="a" style="left:432px;top:320.5px;" width="6" height="6" viewBox="0 0 6 6"><path d="M0.7999999999999998 1.9 L3 4.1 L5.2 1.9" stroke="#bbb" stroke-width="0.9" fill="none"/></svg>
<svg class="a" style="left:445px;top:318px;" width="11" height="10" viewBox="0 0 11 10"><path d="M3 7 A3.5 3.5 0 1 1 8 7" stroke="#ccc" stroke-width="1.1" fill="none"/><circle cx="5.5" cy="4.5" r="1" fill="#ddd"/></svg>
<svg class="a" style="left:456.5px;top:320.5px;" width="6" height="6" viewBox="0 0 6 6"><path d="M0.7999999999999998 1.9 L3 4.1 L5.2 1.9" stroke="#bbb" stroke-width="0.9" fill="none"/></svg>
<div class="a" style="left:466.5px;top:317.5px;width:11.5px;height:11.5px;background:#555;border-radius:2px;"></div>
<svg class="a" style="left:467px;top:318px;" width="11" height="10" viewBox="0 0 11 10"><path d="M2.5 2 V6 A3 3 0 0 0 8.5 6 V2" stroke="#c8c8c8" stroke-width="1.8" fill="none"/></svg>
<svg class="a" style="left:481px;top:318px;" width="10" height="10" viewBox="0 0 10 10"><rect x="1" y="1.5" width="3" height="3" fill="#eee"/><rect x="6" y="1.5" width="3" height="3" fill="#eee"/><rect x="1" y="6" width="3" height="3" fill="#eee"/><rect x="6" y="6" width="3" height="3" fill="#eee"/></svg>
<svg class="a" style="left:491.5px;top:320.5px;" width="6" height="6" viewBox="0 0 6 6"><path d="M0.7999999999999998 1.9 L3 4.1 L5.2 1.9" stroke="#bbb" stroke-width="0.9" fill="none"/></svg>
<svg class="a" style="left:740px;top:318px;" width="12" height="11" viewBox="0 0 12 11"><path d="M2 7 L6 5 L5 10 Z" fill="#eee"/><ellipse cx="7" cy="4" rx="4" ry="2.5" fill="none" stroke="#ddd" stroke-width="1"/><circle cx="7" cy="4" r="1" fill="#ddd"/></svg>
<div class="a" style="left:751.5px;top:317.5px;width:10px;height:11.5px;background:#2a2a2a;border-radius:2px;"></div>
<svg class="a" style="left:753px;top:320.5px;" width="6" height="6" viewBox="0 0 6 6"><path d="M0.7999999999999998 1.9 L3 4.1 L5.2 1.9" stroke="#bbb" stroke-width="0.9" fill="none"/></svg>
<div class="a" style="left:763px;top:317.5px;width:13px;height:11.5px;background:#4772b3;border-radius:2px;"></div>
<svg class="a" style="left:763px;top:317.5px;" width="13" height="11.5" viewBox="0 0 13 11.5"><path d="M3 9 L9.5 2.5 M6 2.5 H9.5 V6" stroke="#fff" stroke-width="1.1" fill="none"/><path d="M3 4 A5 5 0 0 1 9 9" stroke="#dde" stroke-width="0.9" fill="none"/></svg>
<div class="a" style="left:776.5px;top:317.5px;width:10px;height:11.5px;background:#2a2a2a;border-radius:2px;"></div>
<svg class="a" style="left:778px;top:320.5px;" width="6" height="6" viewBox="0 0 6 6"><path d="M0.7999999999999998 1.9 L3 4.1 L5.2 1.9" stroke="#bbb" stroke-width="0.9" fill="none"/></svg>
<div class="a" style="left:791.5px;top:317.5px;width:13px;height:11.5px;background:#4772b3;border-radius:2px;"></div>
<svg class="a" style="left:791.5px;top:317.5px;" width="13" height="11.5" viewBox="0 0 13 11.5"><circle cx="5" cy="6.5" r="3.3" fill="none" stroke="#fff" stroke-width="1.1"/><circle cx="8" cy="5" r="3" fill="#fff" fill-opacity="0.85"/></svg>
<div class="a" style="left:804.5px;top:317.5px;width:10px;height:11.5px;background:#2a2a2a;border-radius:2px;"></div>
<svg class="a" style="left:806px;top:320.5px;" width="6" height="6" viewBox="0 0 6 6"><path d="M0.7999999999999998 1.9 L3 4.1 L5.2 1.9" stroke="#bbb" stroke-width="0.9" fill="none"/></svg>
<div class="a" style="left:820px;top:317.5px;width:12px;height:11.5px;background:#303030;border-radius:2px;"></div>
<svg class="a" style="left:820px;top:317.5px;" width="12" height="11.5" viewBox="0 0 12 11.5"><rect x="2.5" y="2.5" width="7" height="6.5" fill="none" stroke="#666" stroke-width="0.9"/></svg>
<div class="a" style="left:835px;top:317.5px;width:50.5px;height:11.5px;background:#3c3c3c;border-radius:2px;"></div>
<div class="a" style="left:860px;top:317.5px;width:12.5px;height:11.5px;background:#4772b3;"></div>
<svg class="a" style="left:835px;top:317.5px;" width="51" height="11.5" viewBox="0 0 51 11.5"><circle cx="6.5" cy="5.75" r="3.6" fill="none" stroke="#ccc" stroke-width="0.9"/><path d="M2.9 5.75 H10.1 M6.5 2.2 V9.3" stroke="#ccc" stroke-width="0.7"/><circle cx="19" cy="5.75" r="4" fill="#c8c8c8"/><circle cx="31.2" cy="5.75" r="3.9" fill="#fff"/><path d="M31.2 1.85 A3.9 3.9 0 0 0 31.2 9.65Z" fill="#1f4a8a"/><circle cx="43.7" cy="5.75" r="3.9" fill="#777"/><path d="M41 8 L46 3.5" stroke="#ddd" stroke-width="1.2"/></svg>
<div class="a" style="left:885.5px;top:317.5px;width:10px;height:11.5px;background:#2a2a2a;border-radius:2px;"></div>
<svg class="a" style="left:887px;top:320.5px;" width="6" height="6" viewBox="0 0 6 6"><path d="M0.7999999999999998 1.9 L3 4.1 L5.2 1.9" stroke="#bbb" stroke-width="0.9" fill="none"/></svg>
<svg class="a" style="left:815px;top:335px;" width="12" height="11" viewBox="0 0 12 11"><rect x="2" y="2" width="7" height="7" fill="none" stroke="#aaa" stroke-width="0.8" stroke-dasharray="1.5 1"/><path d="M7 7 L10 10" stroke="#bbb"/></svg>
<div class="a" style="left:828px;top:334.5px;width:9.5px;height:11.5px;background:#454545;border-radius:2px;"></div>
<div class="t" style="left:829.2px;top:335.5px;color:#ccc;font-size:7px;">X</div>
<div class="a" style="left:842.5px;top:334.5px;width:53.5px;height:11.5px;background:#2c2c2c;border-radius:2px;"></div>
<div class="t" style="left:846px;top:335.5px;color:#d9d9d9;font-size:6.6px;">Pose Options</div>
<svg class="a" style="left:889px;top:338px;" width="6" height="6" viewBox="0 0 6 6"><path d="M0.7999999999999998 1.9 L3 4.1 L5.2 1.9" stroke="#bbb" stroke-width="0.9" fill="none"/></svg>
<div class="t" style="left:42.5px;top:353px;color:#e8e8e8;font-size:7.1px;">User Perspective</div>
<div class="t" style="left:42.5px;top:365px;color:#e8e8e8;font-size:7.1px;">(0) armature_anime_female_age_16 : ctrl-root</div>
<div class="a" style="left:0px;top:348px;width:1.5px;height:529px;background:#2c2c2c;"></div>
<div class="a" style="left:5.5px;top:354.5px;width:25.5px;height:41px;background:#262626;border-radius:2px;"></div>
<div class="a" style="left:5.5px;top:401px;width:25.5px;height:64px;background:#262626;border-radius:2px;"></div>
<div class="a" style="left:5.5px;top:466.5px;width:25.5px;height:22px;background:#4772b3;border-radius:2px;"></div>
<div class="a" style="left:5.5px;top:493px;width:25.5px;height:41.5px;background:#262626;border-radius:2px;"></div>
<div class="a" style="left:5.5px;top:540px;width:25.5px;height:21px;background:#262626;border-radius:2px;"></div>
<div class="a" style="left:5.5px;top:374.5px;width:25.5px;height:1px;background:#1c1c1c;"></div>
<div class="a" style="left:5.5px;top:421.5px;width:25.5px;height:1px;background:#1c1c1c;"></div>
<div class="a" style="left:5.5px;top:442.5px;width:25.5px;height:1px;background:#1c1c1c;"></div>
<div class="a" style="left:5.5px;top:513.5px;width:25.5px;height:1px;background:#1c1c1c;"></div>
<svg class="a" style="left:5.5px;top:354.5px;" width="25.5" height="21" viewBox="0 0 25.5 21"><rect x="6.5" y="4.5" width="12" height="12" fill="none" stroke="#c9a070" stroke-width="0.9" stroke-dasharray="2 1.3"/><path d="M10 7 L10 14 L12 12 L14 15 L15 14.3 L13 11.5 L15.5 11 Z" fill="#eee"/></svg>
<svg class="a" style="left:5.5px;top:375px;" width="25.5" height="20.5" viewBox="0 0 25.5 20.5"><circle cx="12.75" cy="10.25" r="6.2" fill="none" stroke="#d9c0c0" stroke-width="1" stroke-dasharray="3 1.5"/><path d="M12.75 6.5 V8.7 M12.75 11.8 V14 M9 10.25 H11.2 M14.3 10.25 H16.5" stroke="#ddd" stroke-width="0.9"/></svg>
<svg class="a" style="left:5.5px;top:401px;" width="25.5" height="21" viewBox="0 0 25.5 21"><path d="M12.75 4 V17 M6 10.5 H19.5" stroke="#ddd" stroke-width="0.9"/><path d="M12.75 3 l-2 2.6 h4z M12.75 18 l-2 -2.6 h4z M5 10.5 l2.6 -2 v4z M20.5 10.5 l-2.6 -2 v4z" fill="#eee"/></svg>
<svg class="a" style="left:5.5px;top:422px;" width="25.5" height="20.5" viewBox="0 0 25.5 20.5"><path d="M7 9 A6 6 0 0 1 18 8 M18.5 12 A6 6 0 0 1 7.5 13" stroke="#ddd" stroke-width="1" fill="none"/><path d="M18 5.5 l1.5 3.5 h-3.5z M7.5 15.5 l-1.5 -3.5 h3.5z" fill="#eee"/><path d="M12.75 8 l2.3 2.3 l-2.3 2.3 l-2.3 -2.3z" fill="#eee"/></svg>
<svg class="a" style="left:5.5px;top:443px;" width="25.5" height="22" viewBox="0 0 25.5 22"><rect x="7" y="11" width="6" height="6" fill="#eee"/><rect x="9.5" y="4.5" width="9" height="9" fill="none" stroke="#ccc" stroke-width="0.9"/><path d="M13 11 L17 7 M14.5 7 H17 V9.5" stroke="#ddd" stroke-width="0.9" fill="none"/><path d="M23 20 l1.5 -1.5 v1.5z" fill="#aaa"/></svg>
<svg class="a" style="left:5.5px;top:466.5px;" width="25.5" height="22" viewBox="0 0 25.5 22"><circle cx="12.75" cy="11" r="6.3" fill="none" stroke="#e8eefa" stroke-width="0.9" stroke-dasharray="2.5 1.5"/><rect x="10.5" y="8.75" width="4.5" height="4.5" fill="#fff"/><path d="M12.75 3.5 l-1.5 2 h3z M12.75 18.5 l-1.5 -2 h3z M5.3 11 l2 -1.5 v3z M20.2 11 l-2 -1.5 v3z" fill="#fff"/></svg>
<svg class="a" style="left:5.5px;top:493px;" width="25.5" height="21" viewBox="0 0 25.5 21"><path d="M6 16 L16 5.5 L18 7.5 L8 18 L5.5 18.5 Z" fill="none" stroke="#eee" stroke-width="1"/><path d="M8 18 C 12 12, 15 20, 21 13" stroke="#8fd0b0" stroke-width="0.9" fill="none"/><path d="M23 19.5 l1.5 -1.5 v1.5z" fill="#aaa"/></svg>
<svg class="a" style="left:5.5px;top:514px;" width="25.5" height="20.5" viewBox="0 0 25.5 20.5"><path d="M8 4 V17 H20" stroke="#eee" stroke-width="1.6" fill="none"/><path d="M9 16 V8 A8 8 0 0 1 17 16 Z" fill="#80d0a0"/></svg>
<svg class="a" style="left:5.5px;top:540px;" width="25.5" height="21" viewBox="0 0 25.5 21"><path d="M5.5 8 C 8 16, 17 16, 20 8" stroke="#ddd" stroke-width="0.9" fill="none" stroke-dasharray="1.4 1.2"/><path d="M12.75 10.5 l2 2 l-2 2 l-2 -2z" fill="#8fe0b0"/><circle cx="5.5" cy="8" r="1" fill="#eee"/><circle cx="20" cy="8" r="1" fill="#eee"/><path d="M23 20 l1.5 -1.5 v1.5z" fill="#aaa"/></svg>
<svg class="a" style="left:640px;top:340px" width="80" height="150" viewBox="640 340 80 150">
<circle cx="660.5" cy="378.5" r="5" fill="#5a2a33" stroke="#a0404f" stroke-width="0.9"/>
<line x1="678.75" y1="379.25" x2="679" y2="358.75" stroke="#3d7ee0" stroke-width="1.6"/>
<line x1="678.75" y1="379.25" x2="697" y2="380.75" stroke="#d04050" stroke-width="1.6"/>
<line x1="678.75" y1="379.25" x2="688" y2="376" stroke="#80c040" stroke-width="1.6"/>
<circle cx="669.75" cy="382" r="5.2" fill="#3f5a2a" stroke="#86c440" stroke-width="1.1"/>
<circle cx="678.75" cy="399.5" r="5" fill="#2e4a78" stroke="#3a6ac0" stroke-width="0.9"/>
<circle cx="688" cy="376" r="4.5" fill="#7fbf3c"/>
<text x="688" y="378.6" font-size="7" font-family="Liberation Sans" text-anchor="middle" fill="#1a3010" font-weight="bold">Y</text>
<circle cx="697" cy="380.75" r="5" fill="#e8445e"/>
<text x="697" y="383.4" font-size="7" font-family="Liberation Sans" text-anchor="middle" fill="#3a0a10" font-weight="bold">X</text>
<circle cx="679" cy="358.75" r="5" fill="#3d8ae8"/>
<text x="679" y="361.4" font-size="7" font-family="Liberation Sans" text-anchor="middle" fill="#0a1a40" font-weight="bold">Z</text>
<g fill="#262626" fill-opacity="0.85"><circle cx="697" cy="413.75" r="7"/><circle cx="697" cy="433" r="7"/><circle cx="697" cy="452.5" r="7"/><circle cx="697" cy="471" r="7"/></g>
<g stroke="#eee" fill="none" stroke-width="1.1"><circle cx="698.5" cy="412.3" r="3"/><path d="M696.3 414.5 L693.5 417.3"/><path d="M697 412.3 H700 M698.5 410.8 V413.8" stroke-width="0.8"/></g>
<path d="M694 434 V430 a0.9 0.9 0 0 1 1.8 0 V428.6 a0.9 0.9 0 0 1 1.8 0 V429 a0.9 0.9 0 0 1 1.8 0 V431.5 a0.9 0.9 0 0 1 1.6 0.2 V435 a3.5 3.5 0 0 1 -3.5 3 H697 a3.5 3.5 0 0 1 -3 -2 L692.5 433.3 a0.9 0.9 0 0 1 1.5 -0.7Z" fill="#eee"/>
<g fill="#eee"><circle cx="695.3" cy="450.3" r="2"/><circle cx="699.3" cy="450.3" r="2"/><rect x="693" y="452.6" width="7.5" height="3.6"/><path d="M700.5 454.4 L703 452.8 V456 Z"/></g>
<g stroke="#eee" fill="none" stroke-width="0.8"><path d="M693.8 467.5 H700.2 L701.8 474.5 H692.2 Z"/><path d="M696 467.5 L695.3 474.5 M698 467.5 L698.7 474.5 M693.2 470 H700.8 M692.8 472.2 H701.2"/></g>
</svg>
<div class="a" style="left:714.5px;top:348px;width:174px;height:437.5px;background:#3b3b3b;"></div>
<div class="a" style="left:888.5px;top:348px;width:11.5px;height:529px;background:#1e1e1e;"></div>
<div class="a" style="left:888.5px;top:350px;width:10.5px;height:25.5px;background:#3a3a3a;border-radius:1px;"></div>
<div class="t" style="left:863.5px;top:357.75px;width:60px;text-align:center;color:#d0d0d0;font-size:7px;transform:rotate(90deg);">Item</div>
<div class="a" style="left:888.5px;top:377px;width:10.5px;height:25px;background:#2a2a2a;border-radius:1px;"></div>
<div class="t" style="left:863.5px;top:384.5px;width:60px;text-align:center;color:#d0d0d0;font-size:7px;transform:rotate(90deg);">Tool</div>
<div class="a" style="left:888.5px;top:403.5px;width:10.5px;height:25px;background:#2a2a2a;border-radius:1px;"></div>
<div class="t" style="left:863.5px;top:411.0px;width:60px;text-align:center;color:#d0d0d0;font-size:7px;transform:rotate(90deg);">View</div>
<div class="a" style="left:888.5px;top:431px;width:10.5px;height:43.5px;background:#2a2a2a;border-radius:1px;"></div>
<div class="t" style="left:863.5px;top:447.75px;width:60px;text-align:center;color:#d0d0d0;font-size:7px;transform:rotate(90deg);">Animation</div>
<svg class="a" style="left:720.5px;top:354.6px;" width="6" height="6" viewBox="0 0 6 6"><path d="M0.8 1.8 L3 4.2 L5.2 1.8" stroke="#c0c0c0" stroke-width="0.9" fill="none"/></svg>
<div class="t" style="left:729.5px;top:352.6px;color:#e0e0e0;font-size:7.1px;">RigLayer</div>
<div class="a" style="left:721px;top:370.4px;width:157.6px;height:11.6px;background:#4772b3;border-radius:1px;"></div>
<div class="t" style="left:711px;top:371.5px;width:177.60000000000002px;text-align:center;color:#f2f2f2;font-size:7px;">Head &amp; Neck</div>
<div class="a" style="left:721px;top:383px;width:157.6px;height:11.6px;background:#4772b3;border-radius:1px;"></div>
<div class="t" style="left:711px;top:384.1px;width:177.60000000000002px;text-align:center;color:#f2f2f2;font-size:7px;">Facial Expression &amp; Properties</div>
<div class="a" style="left:721px;top:395.6px;width:157.6px;height:11.6px;background:#4772b3;border-radius:1px;"></div>
<div class="t" style="left:711px;top:396.7px;width:177.60000000000002px;text-align:center;color:#f2f2f2;font-size:7px;">Body(Main)</div>
<div class="a" style="left:721px;top:408.2px;width:157.6px;height:11.6px;background:#4772b3;border-radius:1px;"></div>
<div class="t" style="left:711px;top:409.3px;width:177.60000000000002px;text-align:center;color:#f2f2f2;font-size:7px;">Body(Tweak)</div>
<div class="a" style="left:721px;top:424.4px;width:157.6px;height:11.6px;background:#4772b3;border-radius:1px;"></div>
<div class="t" style="left:711px;top:425.5px;width:177.60000000000002px;text-align:center;color:#f2f2f2;font-size:7px;">Cloth</div>
<div class="a" style="left:721px;top:440.4px;width:75px;height:11.6px;background:#4772b3;border-radius:1px;"></div>
<div class="t" style="left:711px;top:441.5px;width:95px;text-align:center;color:#f2f2f2;font-size:7px;">Arm R(IK)</div>
<div class="a" style="left:803px;top:440.4px;width:75.6px;height:11.6px;background:#4772b3;border-radius:1px;"></div>
<div class="t" style="left:793px;top:441.5px;width:95.60000000000002px;text-align:center;color:#f2f2f2;font-size:7px;">Arm L(IK)</div>
<div class="a" style="left:721px;top:452.85px;width:75px;height:11.6px;background:#4772b3;border-radius:1px;"></div>
<div class="t" style="left:711px;top:453.95px;width:95px;text-align:center;color:#f2f2f2;font-size:7px;">Arm R(FK)</div>
<div class="a" style="left:803px;top:452.85px;width:75.6px;height:11.6px;background:#4772b3;border-radius:1px;"></div>
<div class="t" style="left:793px;top:453.95px;width:95.60000000000002px;text-align:center;color:#f2f2f2;font-size:7px;">Arm L(FK)</div>
<div class="a" style="left:721px;top:465.3px;width:75px;height:11.6px;background:#4772b3;border-radius:1px;"></div>
<div class="t" style="left:711px;top:466.4px;width:95px;text-align:center;color:#f2f2f2;font-size:7px;">Arm R(Tweak)</div>
<div class="a" style="left:803px;top:465.3px;width:75.6px;height:11.6px;background:#4772b3;border-radius:1px;"></div>
<div class="t" style="left:793px;top:466.4px;width:95.60000000000002px;text-align:center;color:#f2f2f2;font-size:7px;">Arm L(Tweak)</div>
<div class="a" style="left:721px;top:477.75px;width:75px;height:11.6px;background:#4772b3;border-radius:1px;"></div>
<div class="t" style="left:711px;top:478.85px;width:95px;text-align:center;color:#f2f2f2;font-size:7px;">Finger R</div>
<div class="a" style="left:803px;top:477.75px;width:75.6px;height:11.6px;background:#4772b3;border-radius:1px;"></div>
<div class="t" style="left:793px;top:478.85px;width:95.60000000000002px;text-align:center;color:#f2f2f2;font-size:7px;">Finger L</div>
<div class="a" style="left:721px;top:493.6px;width:75px;height:11.6px;background:#4772b3;border-radius:1px;"></div>
<div class="t" style="left:711px;top:494.7px;width:95px;text-align:center;color:#f2f2f2;font-size:7px;">Leg R(IK)</div>
<div class="a" style="left:803px;top:493.6px;width:75.6px;height:11.6px;background:#4772b3;border-radius:1px;"></div>
<div class="t" style="left:793px;top:494.7px;width:95.60000000000002px;text-align:center;color:#f2f2f2;font-size:7px;">Leg L(IK)</div>
<div class="a" style="left:721px;top:506.05px;width:75px;height:11.6px;background:#4772b3;border-radius:1px;"></div>
<div class="t" style="left:711px;top:507.15px;width:95px;text-align:center;color:#f2f2f2;font-size:7px;">Leg R(FK)</div>
<div class="a" style="left:803px;top:506.05px;width:75.6px;height:11.6px;background:#4772b3;border-radius:1px;"></div>
<div class="t" style="left:793px;top:507.15px;width:95.60000000000002px;text-align:center;color:#f2f2f2;font-size:7px;">Leg L(FK)</div>
<div class="a" style="left:721px;top:518.5px;width:75px;height:11.6px;background:#4772b3;border-radius:1px;"></div>
<div class="t" style="left:711px;top:519.6px;width:95px;text-align:center;color:#f2f2f2;font-size:7px;">Leg R(Tweak)</div>
<div class="a" style="left:803px;top:518.5px;width:75.6px;height:11.6px;background:#4772b3;border-radius:1px;"></div>
<div class="t" style="left:793px;top:519.6px;width:95.60000000000002px;text-align:center;color:#f2f2f2;font-size:7px;">Leg L(Tweak)</div>
<div class="a" style="left:721px;top:530.95px;width:75px;height:11.6px;background:#4772b3;border-radius:1px;"></div>
<div class="t" style="left:711px;top:532.05px;width:95px;text-align:center;color:#f2f2f2;font-size:7px;">Toe R</div>
<div class="a" style="left:803px;top:530.95px;width:75.6px;height:11.6px;background:#4772b3;border-radius:1px;"></div>
<div class="t" style="left:793px;top:532.05px;width:95.60000000000002px;text-align:center;color:#f2f2f2;font-size:7px;">Toe L</div>
<div class="a" style="left:721px;top:547.8px;width:157.6px;height:11.4px;background:#4772b3;border-radius:1px;"></div>
<div class="t" style="left:711px;top:548.8px;width:177.60000000000002px;text-align:center;color:#f2f2f2;font-size:7px;">Root</div>
<svg class="a" style="left:720.5px;top:571px;" width="6" height="6" viewBox="0 0 6 6"><path d="M0.8 1.8 L3 4.2 L5.2 1.8" stroke="#c0c0c0" stroke-width="0.9" fill="none"/></svg>
<div class="t" style="left:729.5px;top:569px;color:#e0e0e0;font-size:7.1px;">Rig Properties</div>
<svg class="a" style="left:867px;top:571px;" width="10" height="6" viewBox="0 0 10 6"><circle cx="1" cy="1.5" r="0.5" fill="#777"/><circle cx="1" cy="4.0" r="0.5" fill="#777"/><circle cx="3" cy="1.5" r="0.5" fill="#777"/><circle cx="3" cy="4.0" r="0.5" fill="#777"/><circle cx="5" cy="1.5" r="0.5" fill="#777"/><circle cx="5" cy="4.0" r="0.5" fill="#777"/><circle cx="7" cy="1.5" r="0.5" fill="#777"/><circle cx="7" cy="4.0" r="0.5" fill="#777"/><circle cx="9" cy="1.5" r="0.5" fill="#777"/><circle cx="9" cy="4.0" r="0.5" fill="#777"/></svg>
<svg class="a" style="left:720.5px;top:588.5px;" width="6" height="6" viewBox="0 0 6 6"><path d="M0.8 1.8 L3 4.2 L5.2 1.8" stroke="#c0c0c0" stroke-width="0.9" fill="none"/></svg>
<div class="t" style="left:729.5px;top:586.5px;color:#e0e0e0;font-size:7.1px;">Transform</div>
<svg class="a" style="left:867px;top:588.5px;" width="10" height="6" viewBox="0 0 10 6"><circle cx="1" cy="1.5" r="0.5" fill="#777"/><circle cx="1" cy="4.0" r="0.5" fill="#777"/><circle cx="3" cy="1.5" r="0.5" fill="#777"/><circle cx="3" cy="4.0" r="0.5" fill="#777"/><circle cx="5" cy="1.5" r="0.5" fill="#777"/><circle cx="5" cy="4.0" r="0.5" fill="#777"/><circle cx="7" cy="1.5" r="0.5" fill="#777"/><circle cx="7" cy="4.0" r="0.5" fill="#777"/><circle cx="9" cy="1.5" r="0.5" fill="#777"/><circle cx="9" cy="4.0" r="0.5" fill="#777"/></svg>
<div class="t" style="left:721px;top:605.5px;color:#c8c8c8;font-size:7.1px;">Location:</div>
<div class="a" style="left:721px;top:616.7px;width:121px;height:36.8px;background:#545454;border-radius:2px;"></div>
<div class="a" style="left:721px;top:628.5px;width:121px;height:0.8px;background:#3e3e3e;"></div>
<div class="a" style="left:721px;top:640.9px;width:121px;height:0.8px;background:#3e3e3e;"></div>
<div class="t" style="left:731.5px;top:617.7px;color:#dcdcdc;font-size:7.1px;">X</div>
<div class="t" style="left:534.5px;top:617.7px;width:300px;text-align:right;color:#e0e0e0;font-size:7.1px;">0.00000</div>
<svg class="a" style="left:859px;top:617.7px;" width="11" height="10" viewBox="0 0 11 10"><path d="M2 4.5 V3 a2 2 0 0 1 4 0" stroke="#c8c8c8" stroke-width="0.8" fill="none"/><rect x="4" y="4.5" width="5" height="4" fill="none" stroke="#c8c8c8" stroke-width="0.8"/></svg>
<div class="t" style="left:731.5px;top:630.1px;color:#dcdcdc;font-size:7.1px;">Y</div>
<div class="t" style="left:534.5px;top:630.1px;width:300px;text-align:right;color:#e0e0e0;font-size:7.1px;">0.00000</div>
<svg class="a" style="left:859px;top:630.1px;" width="11" height="10" viewBox="0 0 11 10"><path d="M2 4.5 V3 a2 2 0 0 1 4 0" stroke="#c8c8c8" stroke-width="0.8" fill="none"/><rect x="4" y="4.5" width="5" height="4" fill="none" stroke="#c8c8c8" stroke-width="0.8"/></svg>
<div class="t" style="left:731.5px;top:642.5px;color:#dcdcdc;font-size:7.1px;">Z</div>
<div class="t" style="left:534.5px;top:642.5px;width:300px;text-align:right;color:#e0e0e0;font-size:7.1px;">0.00000</div>
<svg class="a" style="left:859px;top:642.5px;" width="11" height="10" viewBox="0 0 11 10"><path d="M2 4.5 V3 a2 2 0 0 1 4 0" stroke="#c8c8c8" stroke-width="0.8" fill="none"/><rect x="4" y="4.5" width="5" height="4" fill="none" stroke="#c8c8c8" stroke-width="0.8"/></svg>
<div class="t" style="left:721px;top:657px;color:#c8c8c8;font-size:7.1px;">Rotation:</div>
<div class="t" style="left:860px;top:657px;color:#e0e0e0;font-size:7.1px;">4L</div>
<div class="a" style="left:721px;top:668.6px;width:121px;height:49.2px;background:#545454;border-radius:2px;"></div>
<div class="a" style="left:721px;top:680.4px;width:121px;height:0.8px;background:#3e3e3e;"></div>
<div class="a" style="left:721px;top:692.8px;width:121px;height:0.8px;background:#3e3e3e;"></div>
<div class="a" style="left:721px;top:705.2px;width:121px;height:0.8px;background:#3e3e3e;"></div>
<div class="t" style="left:731.5px;top:669.6px;color:#dcdcdc;font-size:7.1px;">W</div>
<div class="t" style="left:534.5px;top:669.6px;width:300px;text-align:right;color:#e0e0e0;font-size:7.1px;">1.000</div>
<svg class="a" style="left:859px;top:669.6px;" width="11" height="10" viewBox="0 0 11 10"><path d="M2 4.5 V3 a2 2 0 0 1 4 0" stroke="#c8c8c8" stroke-width="0.8" fill="none"/><rect x="4" y="4.5" width="5" height="4" fill="none" stroke="#c8c8c8" stroke-width="0.8"/></svg>
<div class="t" style="left:731.5px;top:682px;color:#dcdcdc;font-size:7.1px;">X</div>
<div class="t" style="left:534.5px;top:682px;width:300px;text-align:right;color:#e0e0e0;font-size:7.1px;">0.000</div>
<svg class="a" style="left:859px;top:682px;" width="11" height="10" viewBox="0 0 11 10"><path d="M2 4.5 V3 a2 2 0 0 1 4 0" stroke="#c8c8c8" stroke-width="0.8" fill="none"/><rect x="4" y="4.5" width="5" height="4" fill="none" stroke="#c8c8c8" stroke-width="0.8"/></svg>
<div class="t" style="left:731.5px;top:694.4px;color:#dcdcdc;font-size:7.1px;">Y</div>
<div class="t" style="left:534.5px;top:694.4px;width:300px;text-align:right;color:#e0e0e0;font-size:7.1px;">0.000</div>
<svg class="a" style="left:859px;top:694.4px;" width="11" height="10" viewBox="0 0 11 10"><path d="M2 4.5 V3 a2 2 0 0 1 4 0" stroke="#c8c8c8" stroke-width="0.8" fill="none"/><rect x="4" y="4.5" width="5" height="4" fill="none" stroke="#c8c8c8" stroke-width="0.8"/></svg>
<div class="t" style="left:731.5px;top:706.8px;color:#dcdcdc;font-size:7.1px;">Z</div>
<div class="t" style="left:534.5px;top:706.8px;width:300px;text-align:right;color:#e0e0e0;font-size:7.1px;">0.000</div>
<svg class="a" style="left:859px;top:706.8px;" width="11" height="10" viewBox="0 0 11 10"><path d="M2 4.5 V3 a2 2 0 0 1 4 0" stroke="#c8c8c8" stroke-width="0.8" fill="none"/><rect x="4" y="4.5" width="5" height="4" fill="none" stroke="#c8c8c8" stroke-width="0.8"/></svg>
<div class="a" style="left:721px;top:721px;width:157px;height:11.5px;background:#282828;border-radius:2px;"></div>
<div class="t" style="left:725.5px;top:721.7px;color:#dcdcdc;font-size:7.1px;">Quaternion (WXYZ)</div>
<svg class="a" style="left:871px;top:724px;" width="6" height="6" viewBox="0 0 6 6"><path d="M0.8 1.8 L3 4.2 L5.2 1.8" stroke="#c0c0c0" stroke-width="0.9" fill="none"/></svg>
<div class="t" style="left:721px;top:735.6px;color:#c8c8c8;font-size:7.1px;">Scale:</div>
<div class="a" style="left:721px;top:746.8px;width:121px;height:36.7px;background:#545454;border-radius:2px;"></div>
<div class="a" style="left:721px;top:758.55px;width:121px;height:0.8px;background:#3e3e3e;"></div>
<div class="a" style="left:721px;top:770.9px;width:121px;height:0.8px;background:#3e3e3e;"></div>
<div class="t" style="left:731.5px;top:747.8px;color:#dcdcdc;font-size:7.1px;">X</div>
<div class="t" style="left:534.5px;top:747.8px;width:300px;text-align:right;color:#e0e0e0;font-size:7.1px;">1.000</div>
<svg class="a" style="left:859px;top:747.8px;" width="11" height="10" viewBox="0 0 11 10"><path d="M2 4.5 V3 a2 2 0 0 1 4 0" stroke="#c8c8c8" stroke-width="0.8" fill="none"/><rect x="4" y="4.5" width="5" height="4" fill="none" stroke="#c8c8c8" stroke-width="0.8"/></svg>
<div class="t" style="left:731.5px;top:760.1px;color:#dcdcdc;font-size:7.1px;">Y</div>
<div class="t" style="left:534.5px;top:760.1px;width:300px;text-align:right;color:#e0e0e0;font-size:7.1px;">1.000</div>
<svg class="a" style="left:859px;top:760.1px;" width="11" height="10" viewBox="0 0 11 10"><path d="M2 4.5 V3 a2 2 0 0 1 4 0" stroke="#c8c8c8" stroke-width="0.8" fill="none"/><rect x="4" y="4.5" width="5" height="4" fill="none" stroke="#c8c8c8" stroke-width="0.8"/></svg>
<div class="t" style="left:731.5px;top:772.5px;color:#dcdcdc;font-size:7.1px;">Z</div>
<div class="t" style="left:534.5px;top:772.5px;width:300px;text-align:right;color:#e0e0e0;font-size:7.1px;">1.000</div>
<svg class="a" style="left:859px;top:772.5px;" width="11" height="10" viewBox="0 0 11 10"><path d="M2 4.5 V3 a2 2 0 0 1 4 0" stroke="#c8c8c8" stroke-width="0.8" fill="none"/><rect x="4" y="4.5" width="5" height="4" fill="none" stroke="#c8c8c8" stroke-width="0.8"/></svg>
<div class="a" style="left:900px;top:316px;width:3px;height:584px;background:#141414;"></div>
<div class="a" style="left:903px;top:527.5px;width:297px;height:3px;background:#141414;"></div>
<div class="a" style="left:903px;top:316px;width:297px;height:211.5px;background:#282828;"></div>
<div class="a" style="left:903px;top:316px;width:297px;height:16px;background:#2e2e2e;"></div>
<svg class="a" style="left:910px;top:318px;" width="20" height="11" viewBox="0 0 20 11"><path d="M2.5 1.5 H5 M3.5 2 V9 H6 M3.5 5.5 H6" stroke="#ddd" stroke-width="0.9" fill="none"/><rect x="6" y="4" width="5" height="2.5" fill="#eee"/><rect x="6" y="7.5" width="5" height="2.5" fill="#eee"/><path d="M13.5 4.5 l1.8 1.8 l1.8 -1.8" stroke="#ccc" stroke-width="0.8" fill="none"/></svg>
<div class="a" style="left:933px;top:317.5px;width:18px;height:12px;background:#3a3a3a;border-radius:2px;"></div>
<svg class="a" style="left:934px;top:318px;" width="18" height="11" viewBox="0 0 18 11"><rect x="2" y="1.5" width="8" height="7" fill="#ddd"/><path d="M3 8 L6 4.5 L9 8 Z" fill="#666"/><rect x="1" y="3" width="1" height="6.5" fill="#999"/><path d="M12 4.5 l1.8 1.8 l1.8 -1.8" stroke="#ccc" stroke-width="0.8" fill="none"/></svg>
<div class="a" style="left:1016px;top:318px;width:69px;height:11px;background:#1e1e1e;border-radius:2px;"></div>
<svg class="a" style="left:1018px;top:318px;" width="11" height="11" viewBox="0 0 11 11"><circle cx="6.5" cy="4.5" r="2.8" fill="none" stroke="#ddd" stroke-width="1"/><path d="M4.5 6.5 L2 9" stroke="#ddd" stroke-width="1.1"/></svg>
<svg class="a" style="left:1171px;top:318px;" width="20" height="11" viewBox="0 0 20 11"><path d="M1.5 1.5 H9.5 L6.5 5.5 V9.5 L4.5 8.5 V5.5 Z" fill="none" stroke="#ddd" stroke-width="0.9"/><path d="M12 4.5 l1.8 1.8 l1.8 -1.8" stroke="#ccc" stroke-width="0.8" fill="none"/></svg>
<div class="a" style="left:1194px;top:318px;width:6px;height:11px;background:#3a3a3a;border-radius:1px;"></div>
<div class="a" style="left:903px;top:345.3px;width:297px;height:12.6px;background:#2b2b2b;"></div>
<div class="a" style="left:903px;top:370.5px;width:297px;height:12.6px;background:#2b2b2b;"></div>
<div class="a" style="left:903px;top:395.7px;width:297px;height:12.6px;background:#2b2b2b;"></div>
<div class="a" style="left:903px;top:420.9px;width:297px;height:12.6px;background:#2b2b2b;"></div>
<div class="a" style="left:903px;top:446.1px;width:297px;height:12.6px;background:#2b2b2b;"></div>
<div class="a" style="left:903px;top:471.3px;width:297px;height:12.6px;background:#2b2b2b;"></div>
<div class="a" style="left:903px;top:496.5px;width:297px;height:12.6px;background:#2b2b2b;"></div>
<div class="a" style="left:903px;top:383.2px;width:297px;height:12.4px;background:#334d80;"></div>
<svg class="a" style="left:916px;top:334px;" width="11" height="10" viewBox="0 0 11 10"><rect x="1" y="1" width="9" height="8" fill="none" stroke="#e0e0e0" stroke-width="1"/><rect x="1" y="1" width="9" height="2.5" fill="#e0e0e0"/><rect x="3.5" y="5" width="4" height="1.5" fill="#e0e0e0"/></svg>
<div class="t" style="left:931px;top:334px;color:#d8d8d8;font-size:7.1px;">Scene Collection</div>
<svg class="a" style="left:918.5px;top:349px;" width="6" height="6" viewBox="0 0 6 6"><path d="M0.8 1.5 H5.2 L3 4.5Z" fill="#ccc"/></svg>
<svg class="a" style="left:930px;top:347px;" width="11" height="10" viewBox="0 0 11 10"><rect x="1" y="1" width="9" height="8" fill="none" stroke="#e0e0e0" stroke-width="1"/><rect x="1" y="1" width="9" height="2.5" fill="#e0e0e0"/><rect x="3.5" y="5" width="4" height="1.5" fill="#e0e0e0"/></svg>
<div class="t" style="left:943.5px;top:347px;color:#d8d8d8;font-size:7.1px;">basemesh_anime_female_age_16</div>
<svg class="a" style="left:1156px;top:347px;" width="10" height="10" viewBox="0 0 10 10"><rect x="1.5" y="1.5" width="7" height="7" fill="#e8e8e8" stroke="#ccc" stroke-width="0.8"/><path d="M2.8 5 L4.3 6.6 L7.3 3.3" stroke="#333" stroke-width="1.1" fill="none"/></svg>
<svg class="a" style="left:1169px;top:347px;" width="10" height="10" viewBox="0 0 10 10"><path d="M1.5 1.5 L8.5 4 L5.5 5.3 L4.3 8.5 Z" fill="#e8e8e8"/></svg>
<svg class="a" style="left:1181px;top:347px;" width="12" height="10" viewBox="0 0 12 10"><path d="M1 5 Q6 0.5 11 5 Q6 9.5 1 5Z" fill="none" stroke="#e8e8e8" stroke-width="1"/><circle cx="6" cy="5" r="1.6" fill="#e8e8e8"/></svg>
<svg class="a" style="left:1194px;top:347px;" width="8" height="10" viewBox="0 0 8 10"><rect x="1" y="2.5" width="7" height="6" fill="none" stroke="#e8e8e8" stroke-width="1"/><rect x="3" y="1" width="3" height="2" fill="#e8e8e8"/></svg>
<div class="a" style="left:921.5px;top:358px;width:0.8px;height:98px;background:#555;"></div>
<svg class="a" style="left:931px;top:361.6px;" width="6" height="6" viewBox="0 0 6 6"><path d="M1.5 0.8 V5.2 L4.5 3Z" fill="#ccc"/></svg>
<svg class="a" style="left:942px;top:359.6px;" width="11" height="10" viewBox="0 0 11 10"><path d="M1.5 1.5 H9.5 L5.5 9 Z" fill="none" stroke="#e8904a" stroke-width="1.4"/></svg>
<div class="t" style="left:956px;top:359.6px;color:#d8d8d8;font-size:7.1px;">age_16_cloth</div>
<svg class="a" style="left:1008px;top:359.6px;" width="10" height="10" viewBox="0 0 10 10"><path d="M2 8.5 L6 4.5 M5.5 2 a2.2 2.2 0 1 0 2.5 2.5" stroke="#6d8fd8" stroke-width="1.3" fill="none"/></svg>
<svg class="a" style="left:1025px;top:359.6px;" width="10" height="10" viewBox="0 0 10 10"><rect x="1" y="1.5" width="3" height="2.5" fill="#bbb"/><rect x="5" y="1.5" width="3" height="2.5" fill="#999"/><rect x="1" y="5" width="3" height="2.5" fill="#999"/><rect x="5" y="5" width="3" height="2.5" fill="#ccc"/><rect x="3" y="8" width="4" height="1.5" fill="#777"/></svg>
<svg class="a" style="left:1038px;top:359.6px;" width="12" height="10" viewBox="0 0 12 10"><path d="M1.5 1.5 H10 L5.75 9 Z" fill="none" stroke="#2ec4a0" stroke-width="1.3"/><circle cx="5.75" cy="4" r="1" fill="#2ec4a0"/></svg>
<svg class="a" style="left:1169px;top:359.6px;" width="10" height="10" viewBox="0 0 10 10"><path d="M1.5 1.5 L8.5 4 L5.5 5.3 L4.3 8.5 Z" fill="#e8e8e8"/></svg>
<svg class="a" style="left:1181px;top:359.6px;" width="12" height="10" viewBox="0 0 12 10"><path d="M1 5 Q6 0.5 11 5 Q6 9.5 1 5Z" fill="none" stroke="#e8e8e8" stroke-width="1"/><circle cx="6" cy="5" r="1.6" fill="#e8e8e8"/></svg>
<svg class="a" style="left:1194px;top:359.6px;" width="8" height="10" viewBox="0 0 8 10"><rect x="1" y="2.5" width="7" height="6" fill="none" stroke="#e8e8e8" stroke-width="1"/><rect x="3" y="1" width="3" height="2" fill="#e8e8e8"/></svg>
<svg class="a" style="left:931px;top:374.2px;" width="6" height="6" viewBox="0 0 6 6"><path d="M1.5 0.8 V5.2 L4.5 3Z" fill="#ccc"/></svg>
<svg class="a" style="left:942px;top:372.2px;" width="11" height="10" viewBox="0 0 11 10"><path d="M1.5 1.5 H9.5 L5.5 9 Z" fill="none" stroke="#e8904a" stroke-width="1.4"/></svg>
<div class="t" style="left:956px;top:372.2px;color:#d8d8d8;font-size:7.1px;">age_16_hair</div>
<svg class="a" style="left:1004px;top:372.2px;" width="10" height="10" viewBox="0 0 10 10"><path d="M2 8.5 L6 4.5 M5.5 2 a2.2 2.2 0 1 0 2.5 2.5" stroke="#6d8fd8" stroke-width="1.3" fill="none"/></svg>
<svg class="a" style="left:1021px;top:372.2px;" width="10" height="10" viewBox="0 0 10 10"><rect x="1" y="1.5" width="3" height="2.5" fill="#bbb"/><rect x="5" y="1.5" width="3" height="2.5" fill="#999"/><rect x="1" y="5" width="3" height="2.5" fill="#999"/><rect x="5" y="5" width="3" height="2.5" fill="#ccc"/><rect x="3" y="8" width="4" height="1.5" fill="#777"/></svg>
<svg class="a" style="left:1034px;top:372.2px;" width="12" height="10" viewBox="0 0 12 10"><path d="M1.5 1.5 H10 L5.75 9 Z" fill="none" stroke="#2ec4a0" stroke-width="1.3"/><circle cx="5.75" cy="4" r="1" fill="#2ec4a0"/></svg>
<svg class="a" style="left:1169px;top:372.2px;" width="10" height="10" viewBox="0 0 10 10"><path d="M1.5 1.5 L8.5 4 L5.5 5.3 L4.3 8.5 Z" fill="#e8e8e8"/></svg>
<svg class="a" style="left:1181px;top:372.2px;" width="12" height="10" viewBox="0 0 12 10"><path d="M1 5 Q6 0.5 11 5 Q6 9.5 1 5Z" fill="none" stroke="#e8e8e8" stroke-width="1"/><circle cx="6" cy="5" r="1.6" fill="#e8e8e8"/></svg>
<svg class="a" style="left:1194px;top:372.2px;" width="8" height="10" viewBox="0 0 8 10"><rect x="1" y="2.5" width="7" height="6" fill="none" stroke="#e8e8e8" stroke-width="1"/><rect x="3" y="1" width="3" height="2" fill="#e8e8e8"/></svg>
<svg class="a" style="left:905px;top:384px;" width="11" height="10" viewBox="0 0 11 10"><rect x="1" y="1" width="2.5" height="2.5" fill="#fff"/><path d="M6.5 2 V5 M6.5 5 L4 9 M6.5 5 L9 9 M4.5 3.5 H9" stroke="#ddd" stroke-width="0.9" fill="none"/></svg>
<svg class="a" style="left:931px;top:386.4px;" width="6" height="6" viewBox="0 0 6 6"><path d="M0.8 1.5 H5.2 L3 4.5Z" fill="#ddd"/></svg>
<div class="a" style="left:940px;top:384px;width:13px;height:11px;background:#4a5a80;border-radius:2px;"></div>
<svg class="a" style="left:941px;top:384.5px;" width="11" height="10" viewBox="0 0 11 10"><path d="M2 1.5 L9 8.5 M9 1.5 L2 8.5" stroke="#f09040" stroke-width="1.5"/><circle cx="5.5" cy="5" r="1.5" fill="#f09040"/></svg>
<div class="t" style="left:956px;top:384.4px;color:#f0a050;font-size:7.1px;">armature_anime_female_age_16</div>
<svg class="a" style="left:1169px;top:384.5px;" width="10" height="10" viewBox="0 0 10 10"><path d="M1.5 1.5 L8.5 4 L5.5 5.3 L4.3 8.5 Z" fill="#f0f0f0"/></svg>
<svg class="a" style="left:1181px;top:384.5px;" width="12" height="10" viewBox="0 0 12 10"><path d="M1 5 Q6 0.5 11 5 Q6 9.5 1 5Z" fill="none" stroke="#eee" stroke-width="1"/><circle cx="6" cy="5" r="1.6" fill="#eee"/></svg>
<svg class="a" style="left:1194px;top:384.5px;" width="8" height="10" viewBox="0 0 8 10"><rect x="1" y="2.5" width="7" height="6" fill="none" stroke="#eee" stroke-width="1"/><rect x="3" y="1" width="3" height="2" fill="#eee"/></svg>
<div class="a" style="left:934px;top:398px;width:0.7px;height:5px;background:#555;"></div>
<div class="a" style="left:934px;top:410.6px;width:0.7px;height:5px;background:#555;"></div>
<div class="a" style="left:934px;top:423.2px;width:0.7px;height:5px;background:#555;"></div>
<div class="a" style="left:934px;top:435.8px;width:0.7px;height:5px;background:#555;"></div>
<div class="a" style="left:934px;top:448.4px;width:0.7px;height:5px;background:#555;"></div>
<svg class="a" style="left:943.5px;top:399px;" width="6" height="6" viewBox="0 0 6 6"><path d="M1.5 0.8 V5.2 L4.5 3Z" fill="#ccc"/></svg>
<svg class="a" style="left:955px;top:397px;" width="11" height="10" viewBox="0 0 11 10"><path d="M2 2 H6 L8 5 L5 8 M2 8 H4" stroke="#ccc" stroke-width="0.9" fill="none"/></svg>
<div class="t" style="left:968.5px;top:397px;color:#d8d8d8;font-size:7.1px;">Animation</div>
<svg class="a" style="left:1016px;top:397px;" width="10" height="10" viewBox="0 0 10 10"><path d="M2 2 H5 L7 5 L5 8" stroke="#ccc" stroke-width="0.9" fill="none"/><circle cx="7.5" cy="7.5" r="1.2" fill="#ccc"/></svg>
<svg class="a" style="left:943.5px;top:411.6px;" width="6" height="6" viewBox="0 0 6 6"><path d="M1.5 0.8 V5.2 L4.5 3Z" fill="#ccc"/></svg>
<div class="a" style="left:953.5px;top:409px;width:13px;height:11px;background:#4c5a50;border-radius:2px;"></div>
<svg class="a" style="left:954px;top:409.5px;" width="12" height="10" viewBox="0 0 12 10"><path d="M3 2 L6 5 L9 2 M6 5 V9 M4 9 H8" stroke="#3ec08a" stroke-width="1.1" fill="none"/></svg>
<div class="t" style="left:968.5px;top:409.6px;color:#d8d8d8;font-size:7.1px;">Pose</div>
<svg class="a" style="left:997px;top:409px;" width="10" height="10" viewBox="0 0 10 10"><path d="M2 5 L5 2 L8 5Z" fill="#3ec08a"/></svg>
<div class="t" style="left:998px;top:413.5px;color:#ccc;font-size:5.5px;">672</div>
<svg class="a" style="left:943.5px;top:424.2px;" width="6" height="6" viewBox="0 0 6 6"><path d="M1.5 0.8 V5.2 L4.5 3Z" fill="#ccc"/></svg>
<svg class="a" style="left:955px;top:422px;" width="11" height="10" viewBox="0 0 11 10"><path d="M2.5 8 L8 2.5" stroke="#ddd" stroke-width="1.5"/><circle cx="2.5" cy="8" r="1.3" fill="#ddd"/><circle cx="8" cy="2.5" r="1.3" fill="#ddd"/></svg>
<div class="t" style="left:968.5px;top:422.2px;color:#d8d8d8;font-size:7.1px;">Bone Groups</div>
<div class="a" style="left:1021px;top:421.5px;width:14px;height:12px;background:#555;border-radius:2px;"></div>
<svg class="a" style="left:1022px;top:422px;" width="12" height="10" viewBox="0 0 12 10"><path d="M2 7 L7 2" stroke="#ddd" stroke-width="1.1"/></svg>
<div class="t" style="left:1027px;top:424.8px;color:#ccc;font-size:5px;">10</div>
<svg class="a" style="left:943.5px;top:436.8px;" width="6" height="6" viewBox="0 0 6 6"><path d="M1.5 0.8 V5.2 L4.5 3Z" fill="#ccc"/></svg>
<svg class="a" style="left:955px;top:434.8px;" width="11" height="10" viewBox="0 0 11 10"><path d="M5.5 1.5 V5 M5.5 5 L2.5 9 M5.5 5 L8.5 9 M2 3.5 H9" stroke="#3ec08a" stroke-width="1.2" fill="none"/></svg>
<div class="t" style="left:968.5px;top:434.8px;color:#d8d8d8;font-size:7.1px;">armature_anime_female_age_16</div>
<svg class="a" style="left:1085px;top:434.8px;" width="10" height="10" viewBox="0 0 10 10"><path d="M2 2 H5 L7 5 L5 8" stroke="#ccc" stroke-width="0.9" fill="none"/><circle cx="7.5" cy="7.5" r="1.2" fill="#ccc"/></svg>
<svg class="a" style="left:943.5px;top:449.4px;" width="6" height="6" viewBox="0 0 6 6"><path d="M1.5 0.8 V5.2 L4.5 3Z" fill="#ccc"/></svg>
<svg class="a" style="left:954px;top:447.4px;" width="11" height="10" viewBox="0 0 11 10"><path d="M1.5 1.5 H9.5 L5.5 9 Z" fill="none" stroke="#e8904a" stroke-width="1.4"/></svg>
<div class="t" style="left:968.5px;top:447.4px;color:#d8d8d8;font-size:7.1px;">anime_female_age_16</div>
<svg class="a" style="left:1053px;top:447.4px;" width="10" height="10" viewBox="0 0 10 10"><path d="M2 8.5 L6 4.5 M5.5 2 a2.2 2.2 0 1 0 2.5 2.5" stroke="#6d8fd8" stroke-width="1.3" fill="none"/></svg>
<svg class="a" style="left:1066px;top:447.4px;" width="10" height="10" viewBox="0 0 10 10"><rect x="1" y="1.5" width="3" height="2.5" fill="#bbb"/><rect x="5" y="1.5" width="3" height="2.5" fill="#999"/><rect x="1" y="5" width="3" height="2.5" fill="#999"/><rect x="5" y="5" width="3" height="2.5" fill="#ccc"/><rect x="3" y="8" width="4" height="1.5" fill="#777"/></svg>
<svg class="a" style="left:1079px;top:447.4px;" width="12" height="10" viewBox="0 0 12 10"><path d="M1.5 1.5 H10 L5.75 9 Z" fill="none" stroke="#2ec4a0" stroke-width="1.3"/><circle cx="5.75" cy="4" r="1" fill="#2ec4a0"/></svg>
<svg class="a" style="left:1169px;top:447.4px;" width="10" height="10" viewBox="0 0 10 10"><path d="M1.5 1.5 L8.5 4 L5.5 5.3 L4.3 8.5 Z" fill="#e8e8e8"/></svg>
<svg class="a" style="left:1181px;top:447.4px;" width="12" height="10" viewBox="0 0 12 10"><path d="M1 5 Q6 0.5 11 5 Q6 9.5 1 5Z" fill="none" stroke="#e8e8e8" stroke-width="1"/><circle cx="6" cy="5" r="1.6" fill="#e8e8e8"/></svg>
<svg class="a" style="left:1194px;top:447.4px;" width="8" height="10" viewBox="0 0 8 10"><rect x="1" y="2.5" width="7" height="6" fill="none" stroke="#e8e8e8" stroke-width="1"/><rect x="3" y="1" width="3" height="2" fill="#e8e8e8"/></svg>
<svg class="a" style="left:930px;top:460px;" width="11" height="10" viewBox="0 0 11 10"><rect x="1" y="1" width="9" height="8" fill="none" stroke="#aaa" stroke-width="1"/><rect x="1" y="1" width="9" height="2.5" fill="#aaa"/><rect x="3.5" y="5" width="4" height="1.5" fill="#aaa"/></svg>
<div class="t" style="left:943.5px;top:460px;color:#808080;font-size:7.1px;">rig_shape</div>
<svg class="a" style="left:1156px;top:460px;" width="10" height="10" viewBox="0 0 10 10"><rect x="1.5" y="1.5" width="7" height="7" fill="none" stroke="#ccc" stroke-width="0.8"/></svg>
<svg class="a" style="left:1169px;top:460px;" width="10" height="10" viewBox="0 0 10 10"><path d="M1.5 1.5 L8.5 4 L5.5 5.3 L4.3 8.5 Z" fill="#777"/></svg>
<svg class="a" style="left:1181px;top:460px;" width="12" height="10" viewBox="0 0 12 10"><path d="M1 5 Q6 0.5 11 5 Q6 9.5 1 5Z" fill="none" stroke="#777" stroke-width="1"/><circle cx="6" cy="5" r="1.6" fill="#777"/></svg>
<svg class="a" style="left:1194px;top:460px;" width="8" height="10" viewBox="0 0 8 10"><rect x="1" y="2.5" width="7" height="6" fill="none" stroke="#777" stroke-width="1"/><rect x="3" y="1" width="3" height="2" fill="#777"/></svg>
<div class="a" style="left:903px;top:530px;width:297px;height:370px;background:#2d2d2d;"></div>
<div class="a" style="left:903px;top:530px;width:297px;height:16px;background:#2b2b2b;"></div>
<svg class="a" style="left:908px;top:531px;" width="22" height="14" viewBox="0 0 22 14"><rect x="2" y="2" width="10" height="4" rx="2" fill="#eee"/><circle cx="9.5" cy="4" r="1.3" fill="#333"/><rect x="2" y="7.5" width="10" height="4" rx="2" fill="#eee"/><circle cx="4.5" cy="9.5" r="1.3" fill="#333"/><path d="M15 6 l1.8 1.8 l1.8 -1.8" stroke="#ccc" stroke-width="0.8" fill="none"/></svg>
<div class="a" style="left:1024px;top:532px;width:68px;height:10.5px;background:#1e1e1e;border-radius:2px;"></div>
<svg class="a" style="left:1026px;top:532px;" width="11" height="11" viewBox="0 0 11 11"><circle cx="6.5" cy="4.5" r="2.8" fill="none" stroke="#ddd" stroke-width="1"/><path d="M4.5 6.5 L2 9" stroke="#ddd" stroke-width="1.1"/></svg>
<div class="a" style="left:1194px;top:532px;width:6px;height:11px;background:#3a3a3a;border-radius:1px;"></div>
<div class="a" style="left:903px;top:546px;width:18px;height:354px;background:#1f1f1f;"></div>
<div class="a" style="left:903px;top:666.5px;width:18px;height:18.5px;background:#3d3d3d;border-radius:2px;"></div>
<svg class="a" style="left:904.5px;top:551.75px;" width="15" height="14" viewBox="0 0 15 14"><path d="M3 12 V8 M3 5 V3" stroke="#ddd" stroke-width="2"/><path d="M9 12 V6 M7 2 V5 Q9 7 11 5 V2" stroke="#ddd" stroke-width="1.2" fill="none"/></svg>
<svg class="a" style="left:904.5px;top:574px;" width="15" height="14" viewBox="0 0 15 14"><rect x="2" y="5" width="11" height="7" fill="none" stroke="#ddd" stroke-width="1.1"/><rect x="5" y="3" width="4" height="2.5" fill="#ddd"/><rect x="9.5" y="8" width="2" height="2" fill="#ddd"/></svg>
<svg class="a" style="left:904.5px;top:592.5px;" width="15" height="14" viewBox="0 0 15 14"><rect x="2" y="3" width="11" height="3" fill="#ddd"/><rect x="4" y="6" width="7" height="6" fill="none" stroke="#ddd" stroke-width="1.1"/><rect x="6" y="8.5" width="3" height="2" fill="#ddd"/></svg>
<svg class="a" style="left:904.5px;top:610.5px;" width="15" height="14" viewBox="0 0 15 14"><rect x="3" y="3" width="9" height="8" fill="#888"/><rect x="5" y="5" width="7" height="6" fill="#ccc"/><path d="M6 11 L8.5 8 L11 11Z" fill="#555"/></svg>
<svg class="a" style="left:904.5px;top:626.75px;" width="15" height="14" viewBox="0 0 15 14"><path d="M5 2 L7.5 8 L2.5 8 Z" fill="#ddd"/><circle cx="10" cy="9.5" r="2.5" fill="none" stroke="#ddd" stroke-width="1"/><circle cx="10" cy="3.5" r="1.2" fill="#ddd"/></svg>
<svg class="a" style="left:904.5px;top:646.75px;" width="15" height="14" viewBox="0 0 15 14"><circle cx="7.5" cy="7" r="5" fill="#c04050"/><path d="M3 6 Q7 4 12 7 M5 3 Q8 8 6 12" stroke="#401018" stroke-width="1" fill="none"/></svg>
<svg class="a" style="left:904.5px;top:668.75px;" width="15" height="14" viewBox="0 0 15 14"><rect x="3" y="2.5" width="9" height="9" fill="none" stroke="#ddd" stroke-width="0.8" stroke-dasharray="2 1.2"/><rect x="4.5" y="4" width="6" height="6" fill="#f0a040"/></svg>
<svg class="a" style="left:904.5px;top:686.75px;" width="15" height="14" viewBox="0 0 15 14"><circle cx="7.5" cy="7" r="5" fill="none" stroke="#5a8ae0" stroke-width="1.6"/><circle cx="7.5" cy="7" r="2" fill="#e0e8ff"/></svg>
<svg class="a" style="left:904.5px;top:704.25px;" width="15" height="14" viewBox="0 0 15 14"><circle cx="7.5" cy="7" r="4.5" fill="#5a8ae0"/><path d="M2 9 Q7.5 3 13 5" stroke="#ccd8f0" stroke-width="1.2" fill="none"/></svg>
<svg class="a" style="left:904.5px;top:721.75px;" width="15" height="14" viewBox="0 0 15 14"><path d="M8 2 a1.2 1.2 0 1 0 0.1 0 M7.5 4 L6 8 L3 12 M6 8 L10 12 M4 5 L10 5.5" stroke="#3ec08a" stroke-width="1.2" fill="none"/></svg>
<svg class="a" style="left:904.5px;top:739.25px;" width="15" height="14" viewBox="0 0 15 14"><path d="M4 11 L11 3" stroke="#3ec08a" stroke-width="2.5"/><circle cx="3.5" cy="11" r="2" fill="#3ec08a"/><circle cx="11" cy="3" r="2" fill="#3ec08a"/></svg>
<svg class="a" style="left:904.5px;top:756.75px;" width="15" height="14" viewBox="0 0 15 14"><path d="M3 11 L12 3" stroke="#5a8ae0" stroke-width="2"/><circle cx="7.5" cy="7" r="4.5" fill="none" stroke="#c0d0f0" stroke-width="0.9"/></svg>
<svg class="a" style="left:904.5px;top:780px;" width="15" height="14" viewBox="0 0 15 14"><g fill="#d04050"><rect x="2.0" y="2.0" width="2.5" height="2.5" fill-opacity="1"/><rect x="2.0" y="4.5" width="2.5" height="2.5" fill-opacity="0.35"/><rect x="2.0" y="7.0" width="2.5" height="2.5" fill-opacity="1"/><rect x="2.0" y="9.5" width="2.5" height="2.5" fill-opacity="0.35"/><rect x="4.5" y="2.0" width="2.5" height="2.5" fill-opacity="0.35"/><rect x="4.5" y="4.5" width="2.5" height="2.5" fill-opacity="1"/><rect x="4.5" y="7.0" width="2.5" height="2.5" fill-opacity="0.35"/><rect x="4.5" y="9.5" width="2.5" height="2.5" fill-opacity="1"/><rect x="7.0" y="2.0" width="2.5" height="2.5" fill-opacity="1"/><rect x="7.0" y="4.5" width="2.5" height="2.5" fill-opacity="0.35"/><rect x="7.0" y="7.0" width="2.5" height="2.5" fill-opacity="1"/><rect x="7.0" y="9.5" width="2.5" height="2.5" fill-opacity="0.35"/><rect x="9.5" y="2.0" width="2.5" height="2.5" fill-opacity="0.35"/><rect x="9.5" y="4.5" width="2.5" height="2.5" fill-opacity="1"/><rect x="9.5" y="7.0" width="2.5" height="2.5" fill-opacity="0.35"/><rect x="9.5" y="9.5" width="2.5" height="2.5" fill-opacity="1"/></g></svg>
<svg class="a" style="left:926px;top:552px;" width="12" height="11" viewBox="0 0 12 11"><rect x="1.5" y="1.5" width="8" height="8" fill="none" stroke="#bbb" stroke-width="0.7" stroke-dasharray="1.5 1"/><rect x="3" y="3" width="5" height="5" fill="#eee"/></svg>
<div class="t" style="left:942.5px;top:552.5px;color:#dedede;font-size:7.1px;">armature_anime_female_age_16</div>
<svg class="a" style="left:1192px;top:552px;" width="8" height="10" viewBox="0 0 8 10"><path d="M2 9 L4 6 M3 3 L7 7" stroke="#aaa" stroke-width="1"/></svg>
<svg class="a" style="left:928px;top:574.5px;" width="12" height="11" viewBox="0 0 12 11"><rect x="1.5" y="1.5" width="8" height="8" fill="none" stroke="#bbb" stroke-width="0.7" stroke-dasharray="1.5 1"/><rect x="3" y="3" width="5" height="5" fill="#eee"/></svg>
<svg class="a" style="left:939px;top:577px;" width="6" height="6" viewBox="0 0 6 6"><path d="M1 2 L3 4 L5 2" stroke="#ccc" stroke-width="0.8" fill="none"/></svg>
<div class="a" style="left:946px;top:575px;width:254px;height:10.5px;background:#1f1f1f;border-radius:2px;"></div>
<div class="t" style="left:950px;top:575.2px;color:#e6e6e6;font-size:7.1px;">armature_anime_female_age_16</div>
<div class="a" style="left:926px;top:593.5px;width:274px;height:177px;background:#3d3d3d;"></div>
<svg class="a" style="left:930.5px;top:598.3px;" width="6" height="6" viewBox="0 0 6 6"><path d="M0.8 1.8 L3 4.2 L5.2 1.8" stroke="#aaa" stroke-width="0.9" fill="none"/></svg>
<div class="t" style="left:940px;top:596.3px;color:#e0e0e0;font-size:7.1px;">Transform</div>
<div class="a" style="left:1037.5px;top:614px;width:139px;height:36.4px;background:#545454;border-radius:2px;"></div>
<div class="a" style="left:1037.5px;top:625.7px;width:139px;height:0.8px;background:#404040;"></div>
<div class="a" style="left:1037.5px;top:637.9px;width:139px;height:0.8px;background:#404040;"></div>
<div class="t" style="left:731.5px;top:615px;width:300px;text-align:right;color:#d0d0d0;font-size:7.1px;">Location X</div>
<div class="t" style="left:1007px;top:615px;width:200px;text-align:center;color:#e6e6e6;font-size:7.1px;">0.00000</div>
<svg class="a" style="left:1178px;top:615px;" width="11" height="10" viewBox="0 0 11 10"><path d="M2 4.5 V3 a2 2 0 0 1 4 0" stroke="#ccc" stroke-width="0.8" fill="none"/><rect x="4" y="4.5" width="5" height="4" fill="none" stroke="#ccc" stroke-width="0.8"/></svg>
<svg class="a" style="left:1193px;top:618px;" width="4" height="4" viewBox="0 0 4 4"><circle cx="2" cy="2" r="1.2" fill="#ddd"/></svg>
<div class="t" style="left:731.5px;top:627.2px;width:300px;text-align:right;color:#d0d0d0;font-size:7.1px;">Y</div>
<div class="t" style="left:1007px;top:627.2px;width:200px;text-align:center;color:#e6e6e6;font-size:7.1px;">0.00000</div>
<svg class="a" style="left:1178px;top:627.2px;" width="11" height="10" viewBox="0 0 11 10"><path d="M2 4.5 V3 a2 2 0 0 1 4 0" stroke="#ccc" stroke-width="0.8" fill="none"/><rect x="4" y="4.5" width="5" height="4" fill="none" stroke="#ccc" stroke-width="0.8"/></svg>
<svg class="a" style="left:1193px;top:630.2px;" width="4" height="4" viewBox="0 0 4 4"><circle cx="2" cy="2" r="1.2" fill="#ddd"/></svg>
<div class="t" style="left:731.5px;top:639.4px;width:300px;text-align:right;color:#d0d0d0;font-size:7.1px;">Z</div>
<div class="t" style="left:1007px;top:639.4px;width:200px;text-align:center;color:#e6e6e6;font-size:7.1px;">0.00000</div>
<svg class="a" style="left:1178px;top:639.4px;" width="11" height="10" viewBox="0 0 11 10"><path d="M2 4.5 V3 a2 2 0 0 1 4 0" stroke="#ccc" stroke-width="0.8" fill="none"/><rect x="4" y="4.5" width="5" height="4" fill="none" stroke="#ccc" stroke-width="0.8"/></svg>
<svg class="a" style="left:1193px;top:642.4px;" width="4" height="4" viewBox="0 0 4 4"><circle cx="2" cy="2" r="1.2" fill="#ddd"/></svg>
<div class="a" style="left:1037.5px;top:654.8px;width:139px;height:36.8px;background:#545454;border-radius:2px;"></div>
<div class="a" style="left:1037.5px;top:666.5px;width:139px;height:0.8px;background:#404040;"></div>
<div class="a" style="left:1037.5px;top:678.9px;width:139px;height:0.8px;background:#404040;"></div>
<div class="t" style="left:731.5px;top:655.8px;width:300px;text-align:right;color:#d0d0d0;font-size:7.1px;">Rotation X</div>
<div class="t" style="left:1007px;top:655.8px;width:200px;text-align:center;color:#e6e6e6;font-size:7.1px;">0°</div>
<svg class="a" style="left:1178px;top:655.8px;" width="11" height="10" viewBox="0 0 11 10"><path d="M2 4.5 V3 a2 2 0 0 1 4 0" stroke="#ccc" stroke-width="0.8" fill="none"/><rect x="4" y="4.5" width="5" height="4" fill="none" stroke="#ccc" stroke-width="0.8"/></svg>
<svg class="a" style="left:1193px;top:658.8px;" width="4" height="4" viewBox="0 0 4 4"><circle cx="2" cy="2" r="1.2" fill="#ddd"/></svg>
<div class="t" style="left:731.5px;top:668px;width:300px;text-align:right;color:#d0d0d0;font-size:7.1px;">Y</div>
<div class="t" style="left:1007px;top:668px;width:200px;text-align:center;color:#e6e6e6;font-size:7.1px;">0°</div>
<svg class="a" style="left:1178px;top:668px;" width="11" height="10" viewBox="0 0 11 10"><path d="M2 4.5 V3 a2 2 0 0 1 4 0" stroke="#ccc" stroke-width="0.8" fill="none"/><rect x="4" y="4.5" width="5" height="4" fill="none" stroke="#ccc" stroke-width="0.8"/></svg>
<svg class="a" style="left:1193px;top:671px;" width="4" height="4" viewBox="0 0 4 4"><circle cx="2" cy="2" r="1.2" fill="#ddd"/></svg>
<div class="t" style="left:731.5px;top:680.6px;width:300px;text-align:right;color:#d0d0d0;font-size:7.1px;">Z</div>
<div class="t" style="left:1007px;top:680.6px;width:200px;text-align:center;color:#e6e6e6;font-size:7.1px;">0°</div>
<svg class="a" style="left:1178px;top:680.6px;" width="11" height="10" viewBox="0 0 11 10"><path d="M2 4.5 V3 a2 2 0 0 1 4 0" stroke="#ccc" stroke-width="0.8" fill="none"/><rect x="4" y="4.5" width="5" height="4" fill="none" stroke="#ccc" stroke-width="0.8"/></svg>
<svg class="a" style="left:1193px;top:683.6px;" width="4" height="4" viewBox="0 0 4 4"><circle cx="2" cy="2" r="1.2" fill="#ddd"/></svg>
<div class="t" style="left:731.5px;top:697px;width:300px;text-align:right;color:#d0d0d0;font-size:7.1px;">Mode</div>
<div class="a" style="left:1037.5px;top:696px;width:139px;height:12px;background:#242424;border-radius:2px;"></div>
<div class="t" style="left:1042px;top:697px;color:#e6e6e6;font-size:7.1px;">XYZ Euler</div>
<svg class="a" style="left:1169px;top:699.5px;" width="6" height="6" viewBox="0 0 6 6"><path d="M0.8 1.8 L3 4.2 L5.2 1.8" stroke="#aaa" stroke-width="0.9" fill="none"/></svg>
<svg class="a" style="left:1193px;top:700px;" width="4" height="4" viewBox="0 0 4 4"><circle cx="2" cy="2" r="1.2" fill="#ddd"/></svg>
<div class="a" style="left:1037.5px;top:711.5px;width:139px;height:36.7px;background:#545454;border-radius:2px;"></div>
<div class="a" style="left:1037.5px;top:723.25px;width:139px;height:0.8px;background:#404040;"></div>
<div class="a" style="left:1037.5px;top:735.6px;width:139px;height:0.8px;background:#404040;"></div>
<div class="t" style="left:731.5px;top:712.5px;width:300px;text-align:right;color:#d0d0d0;font-size:7.1px;">Scale X</div>
<div class="t" style="left:1007px;top:712.5px;width:200px;text-align:center;color:#e6e6e6;font-size:7.1px;">1.000</div>
<svg class="a" style="left:1178px;top:712.5px;" width="11" height="10" viewBox="0 0 11 10"><path d="M2 4.5 V3 a2 2 0 0 1 4 0" stroke="#ccc" stroke-width="0.8" fill="none"/><rect x="4" y="4.5" width="5" height="4" fill="none" stroke="#ccc" stroke-width="0.8"/></svg>
<svg class="a" style="left:1193px;top:715.5px;" width="4" height="4" viewBox="0 0 4 4"><circle cx="2" cy="2" r="1.2" fill="#ddd"/></svg>
<div class="t" style="left:731.5px;top:724.8px;width:300px;text-align:right;color:#d0d0d0;font-size:7.1px;">Y</div>
<div class="t" style="left:1007px;top:724.8px;width:200px;text-align:center;color:#e6e6e6;font-size:7.1px;">1.000</div>
<svg class="a" style="left:1178px;top:724.8px;" width="11" height="10" viewBox="0 0 11 10"><path d="M2 4.5 V3 a2 2 0 0 1 4 0" stroke="#ccc" stroke-width="0.8" fill="none"/><rect x="4" y="4.5" width="5" height="4" fill="none" stroke="#ccc" stroke-width="0.8"/></svg>
<svg class="a" style="left:1193px;top:727.8px;" width="4" height="4" viewBox="0 0 4 4"><circle cx="2" cy="2" r="1.2" fill="#ddd"/></svg>
<div class="t" style="left:731.5px;top:737.2px;width:300px;text-align:right;color:#d0d0d0;font-size:7.1px;">Z</div>
<div class="t" style="left:1007px;top:737.2px;width:200px;text-align:center;color:#e6e6e6;font-size:7.1px;">1.000</div>
<svg class="a" style="left:1178px;top:737.2px;" width="11" height="10" viewBox="0 0 11 10"><path d="M2 4.5 V3 a2 2 0 0 1 4 0" stroke="#ccc" stroke-width="0.8" fill="none"/><rect x="4" y="4.5" width="5" height="4" fill="none" stroke="#ccc" stroke-width="0.8"/></svg>
<svg class="a" style="left:1193px;top:740.2px;" width="4" height="4" viewBox="0 0 4 4"><circle cx="2" cy="2" r="1.2" fill="#ddd"/></svg>
<svg class="a" style="left:940px;top:760px;" width="6" height="6" viewBox="0 0 6 6"><path d="M1.8 0.8 L4.2 3 L1.8 5.2" stroke="#aaa" stroke-width="0.9" fill="none"/></svg>
<div class="t" style="left:948.5px;top:758px;color:#dcdcdc;font-size:7.1px;">Delta Transform</div>
<div class="a" style="left:926px;top:771.5px;width:274px;height:16.5px;background:#3d3d3d;"></div>
<svg class="a" style="left:930.5px;top:776.75px;" width="6" height="6" viewBox="0 0 6 6"><path d="M1.8 0.8 L4.2 3 L1.8 5.2" stroke="#aaa" stroke-width="0.9" fill="none"/></svg>
<div class="t" style="left:939.5px;top:774.75px;color:#dcdcdc;font-size:7.1px;">Relations</div>
<div class="a" style="left:926px;top:789px;width:274px;height:16px;background:#3d3d3d;"></div>
<svg class="a" style="left:930.5px;top:794px;" width="6" height="6" viewBox="0 0 6 6"><path d="M1.8 0.8 L4.2 3 L1.8 5.2" stroke="#aaa" stroke-width="0.9" fill="none"/></svg>
<div class="t" style="left:939.5px;top:792px;color:#dcdcdc;font-size:7.1px;">Collections</div>
<div class="a" style="left:926px;top:806px;width:274px;height:16px;background:#3d3d3d;"></div>
<svg class="a" style="left:930.5px;top:811px;" width="6" height="6" viewBox="0 0 6 6"><path d="M1.8 0.8 L4.2 3 L1.8 5.2" stroke="#aaa" stroke-width="0.9" fill="none"/></svg>
<div class="t" style="left:939.5px;top:809px;color:#dcdcdc;font-size:7.1px;">Motion Paths</div>
<div class="a" style="left:926px;top:823px;width:274px;height:77px;background:#3d3d3d;"></div>
<svg class="a" style="left:930.5px;top:828.3px;" width="6" height="6" viewBox="0 0 6 6"><path d="M0.8 1.8 L3 4.2 L5.2 1.8" stroke="#aaa" stroke-width="0.9" fill="none"/></svg>
<div class="t" style="left:939.5px;top:826.3px;color:#e0e0e0;font-size:7.1px;">Visibility</div>
<svg class="a" style="left:1037.5px;top:845px;" width="9" height="9" viewBox="0 0 9 9"><rect x="0.5" y="0.5" width="8" height="8" rx="1.5" fill="#4772b3"/><path d="M2 4.5 L3.8 6.4 L7 2.8" stroke="#fff" stroke-width="1.1" fill="none"/></svg>
<div class="t" style="left:1048px;top:844.5px;color:#e0e0e0;font-size:7.1px;">Selectable</div>
<div class="t" style="left:731.5px;top:860.5px;width:300px;text-align:right;color:#d0d0d0;font-size:7.1px;">Show In</div>
<svg class="a" style="left:1037.5px;top:861px;" width="9" height="9" viewBox="0 0 9 9"><rect x="0.5" y="0.5" width="8" height="8" rx="1.5" fill="#4772b3"/><path d="M2 4.5 L3.8 6.4 L7 2.8" stroke="#fff" stroke-width="1.1" fill="none"/></svg>
<div class="t" style="left:1048px;top:860.5px;color:#e0e0e0;font-size:7.1px;">Viewports</div>
<svg class="a" style="left:1037.5px;top:875px;" width="9" height="9" viewBox="0 0 9 9"><rect x="0.5" y="0.5" width="8" height="8" rx="1.5" fill="#4772b3"/><path d="M2 4.5 L3.8 6.4 L7 2.8" stroke="#fff" stroke-width="1.1" fill="none"/></svg>
<div class="t" style="left:1048px;top:874.5px;color:#e0e0e0;font-size:7.1px;">Renders</div>
<svg class="a" style="left:1193px;top:863.5px;" width="4" height="4" viewBox="0 0 4 4"><circle cx="2" cy="2" r="1.2" fill="#ddd"/></svg>
<svg class="a" style="left:1193px;top:877.5px;" width="4" height="4" viewBox="0 0 4 4"><circle cx="2" cy="2" r="1.2" fill="#ddd"/></svg>
<div class="a" style="left:0px;top:877px;width:900px;height:23px;background:#1d1d1d;"></div>
<div class="a" style="left:0px;top:878px;width:900px;height:17px;background:#2e2e2e;"></div>
<svg class="a" style="left:7px;top:880px;" width="20" height="13" viewBox="0 0 20 13"><circle cx="6.5" cy="6.5" r="4.8" fill="#eee"/><path d="M6.5 6.5 L9 3.5 A4 4 0 0 0 4 4Z" fill="#333"/><path d="M13 5.5 l1.8 1.8 l1.8 -1.8" stroke="#ccc" stroke-width="0.8" fill="none"/></svg>
<div class="a" style="left:30.5px;top:880.5px;width:41px;height:11.5px;background:#282828;border-radius:2px;"></div>
<div class="t" style="left:33px;top:881.3px;color:#d8d8d8;font-size:7.1px;">Playback</div>
<svg class="a" style="left:65px;top:883px;" width="6" height="6" viewBox="0 0 6 6"><path d="M1 2 L3 4 L5 2" stroke="#ccc" stroke-width="0.8" fill="none"/></svg>
<div class="a" style="left:72.5px;top:880.5px;width:37px;height:11.5px;background:#282828;border-radius:2px;"></div>
<div class="t" style="left:76.5px;top:881.3px;color:#d8d8d8;font-size:7.1px;">Keying</div>
<svg class="a" style="left:103px;top:883px;" width="6" height="6" viewBox="0 0 6 6"><path d="M1 2 L3 4 L5 2" stroke="#ccc" stroke-width="0.8" fill="none"/></svg>
<div class="t" style="left:115px;top:881.3px;color:#d8d8d8;font-size:7.1px;">View</div>
<div class="t" style="left:140.5px;top:881.3px;color:#d8d8d8;font-size:7.1px;">Marker</div>
<div class="a" style="left:393.5px;top:881px;width:10px;height:11px;background:#4a4a4a;border-radius:2px;"></div>
<svg class="a" style="left:393.5px;top:881px;" width="10" height="11" viewBox="0 0 10 11"><circle cx="5" cy="5.5" r="2.2" fill="#eee"/></svg>
<div class="a" style="left:404px;top:881px;width:10px;height:11px;background:#303030;border-radius:2px;"></div>
<div class="a" style="left:421.5px;top:881px;width:73.5px;height:11px;background:#3c3c3c;border-radius:2px;"></div>
<svg class="a" style="left:421.5px;top:881px;" width="73.5" height="11" viewBox="0 0 73.5 11"><g fill="#eee"><rect x="3" y="3" width="1.2" height="5"/><path d="M4.5 5.5 L8 3 V8Z"/><path d="M12 5.5 L14 3.5 L16 5.5 L14 7.5Z M16.5 5.5 L19 3 V8Z"/><path d="M27 5.5 L32 2.5 V8.5Z"/><path d="M40 2.5 V8.5 L45 5.5Z"/><path d="M51 3 V8 L54.5 5.5Z M55 5.5 L57 3.5 L59 5.5 L57 7.5Z"/><path d="M64 3 V8 L67.5 5.5Z"/><rect x="68" y="3" width="1.2" height="5"/></g></svg>
<div class="a" style="left:725.5px;top:880.8px;width:46.5px;height:11.2px;background:#555;border-radius:2px;"></div>
<div class="t" style="left:728.7px;top:881.4px;width:40px;text-align:center;color:#e6e6e6;font-size:7.1px;">0</div>
<div class="a" style="left:775px;top:880.8px;width:12px;height:11.2px;background:#3a3a3a;border-radius:2px;"></div>
<svg class="a" style="left:775px;top:880.8px;" width="12" height="11.2" viewBox="0 0 12 11.2"><circle cx="6" cy="6.3" r="3.5" fill="none" stroke="#ddd" stroke-width="0.9"/><path d="M6 6.3 V4.2 M4.5 1.8 H7.5" stroke="#ddd" stroke-width="0.9"/></svg>
<div class="a" style="left:788px;top:880.8px;width:55.5px;height:11.2px;background:#4a4a4a;border-radius:2px;"></div>
<div class="t" style="left:797px;top:881.4px;color:#dcdcdc;font-size:7.1px;">Start</div>
<div class="t" style="left:815px;top:881.4px;width:20px;text-align:right;color:#e6e6e6;font-size:7.1px;">1</div>
<div class="a" style="left:844px;top:880.8px;width:52px;height:11.2px;background:#4a4a4a;border-radius:2px;"></div>
<div class="t" style="left:852.5px;top:881.4px;color:#dcdcdc;font-size:7.1px;">End</div>
<div class="t" style="left:859px;top:881.4px;width:30px;text-align:right;color:#e6e6e6;font-size:7.1px;">250</div>
<div class="a" style="left:0px;top:895px;width:900px;height:5px;background:#232323;"></div>
<div class="a" style="left:6px;top:895.5px;width:12px;height:4.5px;overflow:hidden"><div style="margin-top:1.5px;text-align:center;color:#bdbdbd;font-size:7px;line-height:8px;">-20</div></div>
<div class="a" style="left:37px;top:895.5px;width:12px;height:4.5px;overflow:hidden"><div style="margin-top:1.5px;text-align:center;color:#bdbdbd;font-size:7px;line-height:8px;">0</div></div>
<div class="a" style="left:68px;top:895.5px;width:12px;height:4.5px;overflow:hidden"><div style="margin-top:1.5px;text-align:center;color:#bdbdbd;font-size:7px;line-height:8px;">20</div></div>
<div class="a" style="left:99px;top:895.5px;width:12px;height:4.5px;overflow:hidden"><div style="margin-top:1.5px;text-align:center;color:#bdbdbd;font-size:7px;line-height:8px;">40</div></div>
<div class="a" style="left:130px;top:895.5px;width:12px;height:4.5px;overflow:hidden"><div style="margin-top:1.5px;text-align:center;color:#bdbdbd;font-size:7px;line-height:8px;">60</div></div>
<div class="a" style="left:161px;top:895.5px;width:12px;height:4.5px;overflow:hidden"><div style="margin-top:1.5px;text-align:center;color:#bdbdbd;font-size:7px;line-height:8px;">80</div></div>
<div class="a" style="left:192px;top:895.5px;width:12px;height:4.5px;overflow:hidden"><div style="margin-top:1.5px;text-align:center;color:#bdbdbd;font-size:7px;line-height:8px;">100</div></div>
<div class="a" style="left:223px;top:895.5px;width:12px;height:4.5px;overflow:hidden"><div style="margin-top:1.5px;text-align:center;color:#bdbdbd;font-size:7px;line-height:8px;">120</div></div>
<div class="a" style="left:254px;top:895.5px;width:12px;height:4.5px;overflow:hidden"><div style="margin-top:1.5px;text-align:center;color:#bdbdbd;font-size:7px;line-height:8px;">140</div></div>
<div class="a" style="left:285px;top:895.5px;width:12px;height:4.5px;overflow:hidden"><div style="margin-top:1.5px;text-align:center;color:#bdbdbd;font-size:7px;line-height:8px;">160</div></div>
<div class="a" style="left:316px;top:895.5px;width:12px;height:4.5px;overflow:hidden"><div style="margin-top:1.5px;text-align:center;color:#bdbdbd;font-size:7px;line-height:8px;">180</div></div>
<div class="a" style="left:347px;top:895.5px;width:12px;height:4.5px;overflow:hidden"><div style="margin-top:1.5px;text-align:center;color:#bdbdbd;font-size:7px;line-height:8px;">200</div></div>
<div class="a" style="left:378px;top:895.5px;width:12px;height:4.5px;overflow:hidden"><div style="margin-top:1.5px;text-align:center;color:#bdbdbd;font-size:7px;line-height:8px;">220</div></div>
<div class="a" style="left:409px;top:895.5px;width:12px;height:4.5px;overflow:hidden"><div style="margin-top:1.5px;text-align:center;color:#bdbdbd;font-size:7px;line-height:8px;">240</div></div>
<div class="a" style="left:440px;top:895.5px;width:12px;height:4.5px;overflow:hidden"><div style="margin-top:1.5px;text-align:center;color:#bdbdbd;font-size:7px;line-height:8px;">260</div></div>
<div class="a" style="left:471px;top:895.5px;width:12px;height:4.5px;overflow:hidden"><div style="margin-top:1.5px;text-align:center;color:#bdbdbd;font-size:7px;line-height:8px;">280</div></div>
<div class="a" style="left:502px;top:895.5px;width:12px;height:4.5px;overflow:hidden"><div style="margin-top:1.5px;text-align:center;color:#bdbdbd;font-size:7px;line-height:8px;">300</div></div>
<div class="a" style="left:533px;top:895.5px;width:12px;height:4.5px;overflow:hidden"><div style="margin-top:1.5px;text-align:center;color:#bdbdbd;font-size:7px;line-height:8px;">320</div></div>
<div class="a" style="left:564px;top:895.5px;width:12px;height:4.5px;overflow:hidden"><div style="margin-top:1.5px;text-align:center;color:#bdbdbd;font-size:7px;line-height:8px;">340</div></div>
<div class="a" style="left:595px;top:895.5px;width:12px;height:4.5px;overflow:hidden"><div style="margin-top:1.5px;text-align:center;color:#bdbdbd;font-size:7px;line-height:8px;">360</div></div>
<div class="a" style="left:626px;top:895.5px;width:12px;height:4.5px;overflow:hidden"><div style="margin-top:1.5px;text-align:center;color:#bdbdbd;font-size:7px;line-height:8px;">380</div></div>
<div class="a" style="left:657px;top:895.5px;width:12px;height:4.5px;overflow:hidden"><div style="margin-top:1.5px;text-align:center;color:#bdbdbd;font-size:7px;line-height:8px;">400</div></div>
<div class="a" style="left:688px;top:895.5px;width:12px;height:4.5px;overflow:hidden"><div style="margin-top:1.5px;text-align:center;color:#bdbdbd;font-size:7px;line-height:8px;">420</div></div>
<div class="a" style="left:719px;top:895.5px;width:12px;height:4.5px;overflow:hidden"><div style="margin-top:1.5px;text-align:center;color:#bdbdbd;font-size:7px;line-height:8px;">440</div></div>
<div class="a" style="left:750px;top:895.5px;width:12px;height:4.5px;overflow:hidden"><div style="margin-top:1.5px;text-align:center;color:#bdbdbd;font-size:7px;line-height:8px;">460</div></div>
<div class="a" style="left:781px;top:895.5px;width:12px;height:4.5px;overflow:hidden"><div style="margin-top:1.5px;text-align:center;color:#bdbdbd;font-size:7px;line-height:8px;">480</div></div>
<div class="a" style="left:812px;top:895.5px;width:12px;height:4.5px;overflow:hidden"><div style="margin-top:1.5px;text-align:center;color:#bdbdbd;font-size:7px;line-height:8px;">500</div></div>
<div class="a" style="left:843px;top:895.5px;width:12px;height:4.5px;overflow:hidden"><div style="margin-top:1.5px;text-align:center;color:#bdbdbd;font-size:7px;line-height:8px;">520</div></div>
<div class="a" style="left:874px;top:895.5px;width:12px;height:4.5px;overflow:hidden"><div style="margin-top:1.5px;text-align:center;color:#bdbdbd;font-size:7px;line-height:8px;">540</div></div>
<div class="a" style="left:97px;top:895.5px;width:15.5px;height:4.5px;background:#4772b3;border-radius:1.5px;"></div>
</body></html>
